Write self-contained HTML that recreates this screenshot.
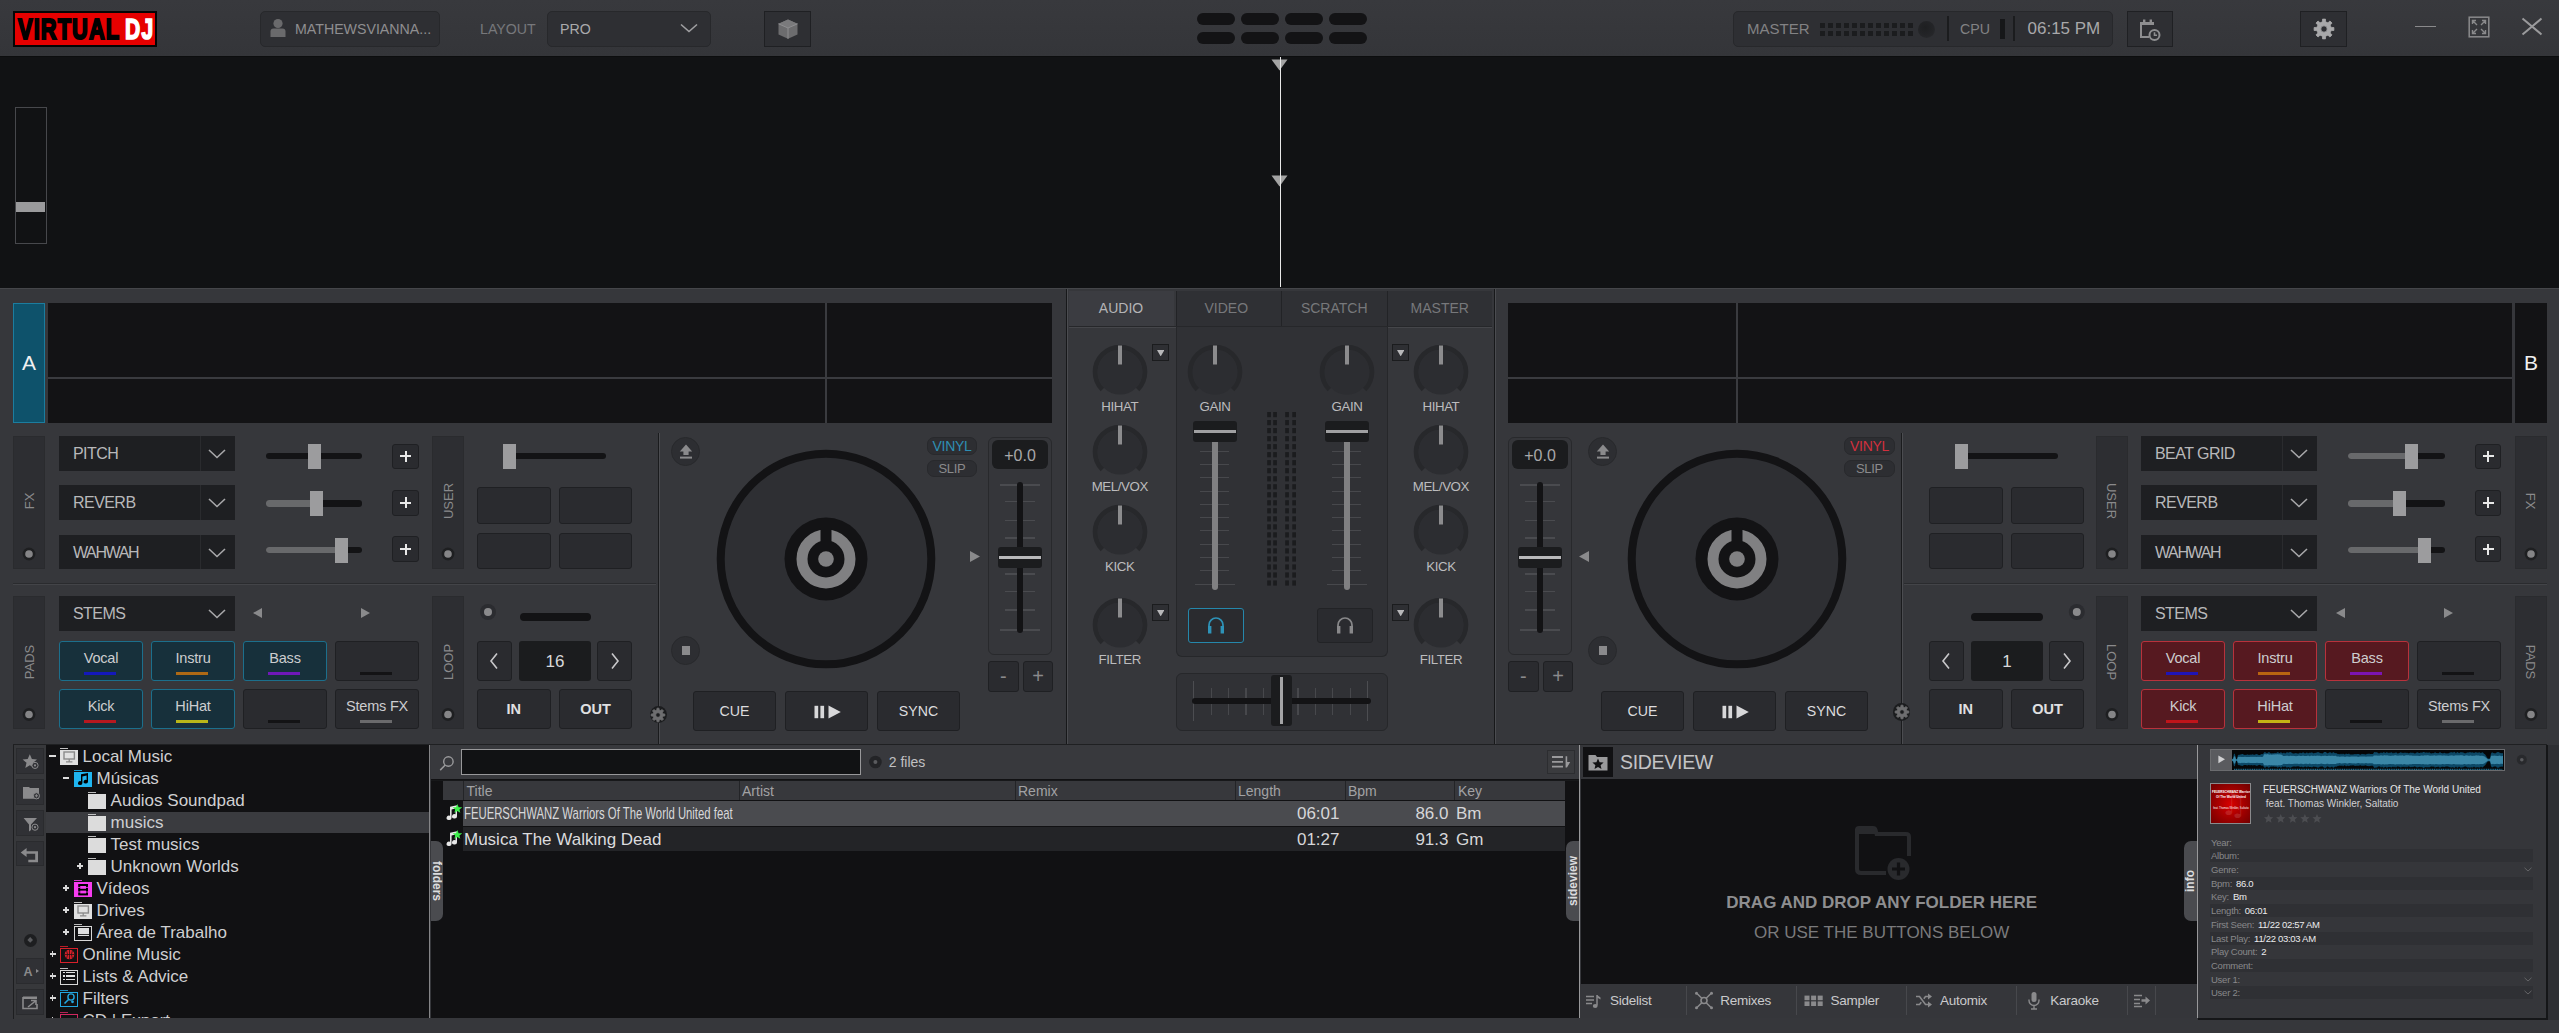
<!DOCTYPE html>
<html lang="en"><head><meta charset="utf-8"><title>VirtualDJ</title>
<style>
html,body{margin:0;padding:0;}
body{width:2559px;height:1033px;overflow:hidden;position:relative;background:#36373b;
 font-family:"Liberation Sans",sans-serif;color:#bbb;}
body div, body svg{position:absolute;box-sizing:border-box;}
.t{white-space:nowrap;}
.btn{background:#2a2b2f;border:1px solid #1f2023;border-radius:3px;}
.dd{background:#1e1f22;}
.strip{background:#2d2e32;border:1px solid #2a2b2e;}
.c{display:flex;align-items:center;justify-content:center;white-space:nowrap;}
.rot{white-space:nowrap;transform-origin:center center;}

</style></head>
<body>
<div style="left:0px;top:0px;width:2559px;height:56px;background:linear-gradient(#38393d,#343539);"></div>
<div style="left:13px;top:11px;width:144px;height:36px;background:#e60000;border:2px solid #050505;overflow:hidden;"><div class="t" style="left:2.6px;top:-6.3px;font-size:30px;line-height:44px;font-weight:bold;color:#000;transform:scaleX(0.728);transform-origin:left center;-webkit-text-stroke:2.1px #000;letter-spacing:1.5px;">VIRTUAL</div><div class="t" style="left:109.8px;top:-6.3px;font-size:30px;line-height:44px;font-weight:bold;color:#fff;transform:scaleX(0.70);transform-origin:left center;-webkit-text-stroke:1.7px #fff;letter-spacing:1.8px;">DJ</div></div>
<div style="left:260px;top:11px;width:180px;height:36px;background:#2e2f33;border:1px solid #27282b;border-radius:5px;"></div>
<svg style="left:269px;top:18px;" width="18" height="20" viewBox="0 0 18 20"><circle cx="9" cy="5.5" r="4.6" fill="#6a6a6c"/><path d="M1.5 19V13.5Q1.5 10.5 4.5 10.5H13.5Q16.5 10.5 16.5 13.5V19Z" fill="#6a6a6c"/></svg>
<div class="t" style="left:295px;top:19.6px;font-size:14.2px;line-height:18px;color:#8e8e90;">MATHEWSVIANNA...</div>
<div class="t" style="left:480px;top:19.8px;font-size:14.2px;line-height:18px;color:#77787b;">LAYOUT</div>
<div style="left:547px;top:11px;width:164px;height:36px;background:#2e2f33;border:1px solid #27282b;border-radius:5px;"></div>
<div class="t" style="left:560px;top:19.8px;font-size:14.2px;line-height:18px;color:#aaaaac;">PRO</div>
<svg style="left:679px;top:22px;" width="20" height="12" viewBox="0 0 20 12"><path d="M2 2.5L10 9.5L18 2.5" fill="none" stroke="#a0a0a2" stroke-width="1.6"/></svg>
<div style="left:764px;top:11px;width:47px;height:36px;background:#2e2f33;border:1px solid #1f2023;"></div>
<svg style="left:776px;top:17px;" width="24" height="24" viewBox="0 0 24 24"><path d="M12 2.5L21.5 6.8V17.4L12 21.8L2.5 17.4V6.8Z" fill="#6c6c6e"/><path d="M12 2.5L21.5 6.8L12 11L2.5 6.8Z" fill="#7a7a7c"/><path d="M2.5 6.8L12 11L21.5 6.8M12 11V21.8" stroke="#8e8e90" stroke-width="1" fill="none"/></svg>
<div style="left:1197px;top:13px;width:38px;height:12px;background:#131315;border-radius:6px;"></div>
<div style="left:1241px;top:13px;width:38px;height:12px;background:#131315;border-radius:6px;"></div>
<div style="left:1285px;top:13px;width:38px;height:12px;background:#131315;border-radius:6px;"></div>
<div style="left:1329px;top:13px;width:38px;height:12px;background:#131315;border-radius:6px;"></div>
<div style="left:1197px;top:32px;width:38px;height:12px;background:#131315;border-radius:6px;"></div>
<div style="left:1241px;top:32px;width:38px;height:12px;background:#131315;border-radius:6px;"></div>
<div style="left:1285px;top:32px;width:38px;height:12px;background:#131315;border-radius:6px;"></div>
<div style="left:1329px;top:32px;width:38px;height:12px;background:#131315;border-radius:6px;"></div>
<div style="left:1733px;top:11px;width:380px;height:36px;background:#2e2f33;border:1px solid #27282b;border-radius:5px;"></div>
<div class="t" style="left:1747px;top:19.2px;font-size:15px;line-height:20px;color:#828284;">MASTER</div>
<div style="left:1820px;top:23px;width:5.4px;height:5px;background:#1b1c1e;"></div>
<div style="left:1828px;top:23px;width:5.4px;height:5px;background:#1b1c1e;"></div>
<div style="left:1836px;top:23px;width:5.4px;height:5px;background:#1b1c1e;"></div>
<div style="left:1844px;top:23px;width:5.4px;height:5px;background:#1b1c1e;"></div>
<div style="left:1852px;top:23px;width:5.4px;height:5px;background:#1b1c1e;"></div>
<div style="left:1860px;top:23px;width:5.4px;height:5px;background:#1b1c1e;"></div>
<div style="left:1868px;top:23px;width:5.4px;height:5px;background:#1b1c1e;"></div>
<div style="left:1876px;top:23px;width:5.4px;height:5px;background:#1b1c1e;"></div>
<div style="left:1884px;top:23px;width:5.4px;height:5px;background:#1b1c1e;"></div>
<div style="left:1892px;top:23px;width:5.4px;height:5px;background:#1b1c1e;"></div>
<div style="left:1900px;top:23px;width:5.4px;height:5px;background:#1b1c1e;"></div>
<div style="left:1908px;top:23px;width:5.4px;height:5px;background:#1b1c1e;"></div>
<div style="left:1820px;top:30.5px;width:5.4px;height:5px;background:#1b1c1e;"></div>
<div style="left:1828px;top:30.5px;width:5.4px;height:5px;background:#1b1c1e;"></div>
<div style="left:1836px;top:30.5px;width:5.4px;height:5px;background:#1b1c1e;"></div>
<div style="left:1844px;top:30.5px;width:5.4px;height:5px;background:#1b1c1e;"></div>
<div style="left:1852px;top:30.5px;width:5.4px;height:5px;background:#1b1c1e;"></div>
<div style="left:1860px;top:30.5px;width:5.4px;height:5px;background:#1b1c1e;"></div>
<div style="left:1868px;top:30.5px;width:5.4px;height:5px;background:#1b1c1e;"></div>
<div style="left:1876px;top:30.5px;width:5.4px;height:5px;background:#1b1c1e;"></div>
<div style="left:1884px;top:30.5px;width:5.4px;height:5px;background:#1b1c1e;"></div>
<div style="left:1892px;top:30.5px;width:5.4px;height:5px;background:#1b1c1e;"></div>
<div style="left:1900px;top:30.5px;width:5.4px;height:5px;background:#1b1c1e;"></div>
<div style="left:1908px;top:30.5px;width:5.4px;height:5px;background:#1b1c1e;"></div>
<div style="left:1918px;top:20.5px;width:17px;height:17px;border-radius:50%;background:radial-gradient(circle at 42% 38%,#1e1f21 0%,#242528 60%,#2b2c2f 100%);"></div>
<div style="left:1947px;top:16px;width:1.5px;height:25px;background:#1b1c1e;"></div>
<div class="t" style="left:1960px;top:20px;font-size:14.2px;line-height:18px;color:#828284;">CPU</div>
<div style="left:1999.5px;top:19px;width:5.5px;height:20px;background:#161719;"></div>
<div style="left:2013px;top:16px;width:1.5px;height:25px;background:#1b1c1e;"></div>
<div class="t" style="left:2027.5px;top:18px;font-size:17px;line-height:22px;color:#a8a8aa;">06:15 PM</div>
<div style="left:2127px;top:11px;width:46px;height:36px;background:#2e2f33;border:1px solid #1f2023;"></div>
<svg style="left:2138px;top:18px;" width="26" height="26" viewBox="0 0 26 26"><path d="M3 4H16V7H3Z" fill="#8e8e90"/><path d="M3 4V19H11" fill="none" stroke="#8e8e90" stroke-width="2"/><rect x="5" y="1.5" width="2.4" height="4" fill="#8e8e90"/><rect x="11.6" y="1.5" width="2.4" height="4" fill="#8e8e90"/><circle cx="16.5" cy="17" r="5" fill="none" stroke="#8e8e90" stroke-width="2"/><path d="M16.5 14.2V17.3H19" fill="none" stroke="#8e8e90" stroke-width="1.6"/></svg>
<div style="left:2300px;top:11px;width:47px;height:36px;background:#2e2f33;border:1px solid #1f2023;"></div>
<svg style="left:2311.5px;top:17px;" width="24" height="24" viewBox="0 0 24 24"><path d="M19.13 10.44L21.89 10.51L21.89 13.49L19.13 13.56L18.15 15.94L20.04 17.94L17.94 20.04L15.94 18.15L13.56 19.13L13.49 21.89L10.51 21.89L10.44 19.13L8.06 18.15L6.06 20.04L3.96 17.94L5.85 15.94L4.87 13.56L2.11 13.49L2.11 10.51L4.87 10.44L5.85 8.06L3.96 6.06L6.06 3.96L8.06 5.85L10.44 4.87L10.51 2.11L13.49 2.11L13.56 4.87L15.94 5.85L17.94 3.96L20.04 6.06L18.15 8.06ZM15.20 12.00A3.2 3.2 0 1 0 8.80 12.00A3.2 3.2 0 1 0 15.20 12.00Z" fill="#a8a8aa" fill-rule="evenodd" stroke="#a8a8aa" stroke-width="0.8" stroke-linejoin="round"/></svg>
<div style="left:2415px;top:25.5px;width:21px;height:1.5px;background:#8a8a8c;"></div>
<svg style="left:2467.5px;top:15.5px;" width="23" height="23" viewBox="0 0 23 23"><rect x="1.2" y="1.2" width="19.6" height="19.6" fill="none" stroke="#8a8a8c" stroke-width="1.5"/><path d="M4.5 8V4.5H8M4.5 4.5L9 9M14 4.5H17.5V8M17.5 4.5L13 9M4.5 14V17.5H8M4.5 17.5L9 13M17.5 14V17.5H14M17.5 17.5L13 13" fill="none" stroke="#8a8a8c" stroke-width="1.4"/></svg>
<svg style="left:2521px;top:17px;" width="22" height="19" viewBox="0 0 22 19"><path d="M1.5 1.5L20.5 17.5M20.5 1.5L1.5 17.5" stroke="#9a9a9c" stroke-width="2" fill="none"/></svg>
<div style="left:0px;top:56px;width:2559px;height:232px;background:#111214;border-top:1px solid #0c0d0e;"></div>
<div style="left:15px;top:107px;width:32px;height:136.5px;background:#111214;border:1px solid #47484c;"></div>
<div style="left:16px;top:202px;width:29px;height:10px;background:#9a9a9c;"></div>
<div style="left:1279.7px;top:57px;width:1.5px;height:230px;background:#e8e8e8;"></div>
<svg style="left:1270px;top:58px;" width="19" height="14" viewBox="0 0 19 14"><path d="M1.5 1.5H17.5L9.5 12.5Z" fill="#a4a4a4"/></svg>
<svg style="left:1270px;top:173.5px;" width="19" height="14" viewBox="0 0 19 14"><path d="M1.5 1.5H17.5L9.5 12.5Z" fill="#a4a4a4"/></svg>
<div style="left:1279.7px;top:57px;width:1.5px;height:230px;background:#e8e8e8;"></div>
<div style="left:0px;top:288px;width:2559px;height:456px;background:#36373b;border-top:1px solid #45464a;"></div>
<div class="c" style="left:13px;top:303px;width:32px;height:120px;background:#0e526b;border:1px solid #1b7d9f;font-size:21px;color:#f0f0f0;">A</div>
<div style="left:48px;top:303px;width:1004px;height:120px;background:#131315;"></div>
<div style="left:825px;top:303px;width:2px;height:120px;background:#3a3b3f;"></div>
<div style="left:48px;top:377px;width:1004px;height:2px;background:#3a3b3f;"></div>
<div class="strip" style="left:13px;top:436px;width:32px;height:133px;"></div>
<div class="rot c" style="left:-11px;top:491px;width:80px;height:20px;font-size:13px;color:#8a8a8c;transform:rotate(-90deg);">FX</div>
<svg style="left:21px;top:546px;" width="16" height="16" viewBox="0 0 16 16"><circle cx="8" cy="8" r="6.4" fill="#1e1f21"/><circle cx="8" cy="8" r="3.8" fill="#858587"/></svg>
<div class="dd" style="left:59px;top:436px;width:176px;height:35px;"></div>
<div class="t" style="left:73px;top:443.4px;font-size:16px;line-height:21px;color:#b8b8ba;letter-spacing:-0.55px;">PITCH</div>
<div style="left:200px;top:436px;width:1px;height:35px;background:#2a2b2e;"></div>
<svg style="left:208px;top:449.3px;" width="18" height="10" viewBox="0 0 18 10"><path d="M1 1L9 8.5L17 1" fill="none" stroke="#a8a8aa" stroke-width="1.6"/></svg>
<div style="left:266px;top:453.3px;width:96px;height:6.2px;background:#131315;border-radius:3px;"></div>
<div style="left:308px;top:443.8px;width:13px;height:25px;background:#9c9c9e;"></div>
<div class="btn" style="left:392px;top:443.5px;width:27px;height:25.5px;"></div>
<div style="left:400px;top:455.25px;width:11px;height:2px;background:#e8e8e8;"></div>
<div style="left:404.5px;top:450.75px;width:2px;height:11px;background:#e8e8e8;"></div>
<div class="dd" style="left:59px;top:485px;width:176px;height:35px;"></div>
<div class="t" style="left:73px;top:492.4px;font-size:16px;line-height:21px;color:#b8b8ba;letter-spacing:-0.55px;">REVERB</div>
<div style="left:200px;top:485px;width:1px;height:35px;background:#2a2b2e;"></div>
<svg style="left:208px;top:498.3px;" width="18" height="10" viewBox="0 0 18 10"><path d="M1 1L9 8.5L17 1" fill="none" stroke="#a8a8aa" stroke-width="1.6"/></svg>
<div style="left:266px;top:500.4px;width:96px;height:6.2px;background:#131315;border-radius:3px;"></div>
<div style="left:266px;top:500.4px;width:48px;height:6.2px;background:#68696b;border-radius:3px;"></div>
<div style="left:310px;top:490.9px;width:13px;height:25px;background:#9c9c9e;"></div>
<div class="btn" style="left:392px;top:489.5px;width:27px;height:26px;"></div>
<div style="left:400px;top:501.5px;width:11px;height:2px;background:#e8e8e8;"></div>
<div style="left:404.5px;top:497px;width:2px;height:11px;background:#e8e8e8;"></div>
<div class="dd" style="left:59px;top:535px;width:176px;height:34px;"></div>
<div class="t" style="left:73px;top:541.9px;font-size:16px;line-height:21px;color:#b8b8ba;letter-spacing:-1.4px;">WAHWAH</div>
<div style="left:200px;top:535px;width:1px;height:34px;background:#2a2b2e;"></div>
<svg style="left:208px;top:547.8px;" width="18" height="10" viewBox="0 0 18 10"><path d="M1 1L9 8.5L17 1" fill="none" stroke="#a8a8aa" stroke-width="1.6"/></svg>
<div style="left:266px;top:547px;width:96px;height:6.2px;background:#131315;border-radius:3px;"></div>
<div style="left:266px;top:547px;width:73px;height:6.2px;background:#68696b;border-radius:3px;"></div>
<div style="left:335px;top:537.5px;width:13px;height:25px;background:#9c9c9e;"></div>
<div class="btn" style="left:392px;top:536px;width:27px;height:26px;"></div>
<div style="left:400px;top:548px;width:11px;height:2px;background:#e8e8e8;"></div>
<div style="left:404.5px;top:543.5px;width:2px;height:11px;background:#e8e8e8;"></div>
<div class="strip" style="left:432px;top:436px;width:32px;height:133px;"></div>
<div class="rot c" style="left:408px;top:491px;width:80px;height:20px;font-size:13px;color:#8a8a8c;transform:rotate(-90deg);">USER</div>
<svg style="left:440px;top:546px;" width="16" height="16" viewBox="0 0 16 16"><circle cx="8" cy="8" r="6.4" fill="#1e1f21"/><circle cx="8" cy="8" r="3.8" fill="#858587"/></svg>
<div style="left:503px;top:453.3px;width:103px;height:6.2px;background:#131315;border-radius:3px;"></div>
<div style="left:503px;top:443.8px;width:13px;height:25px;background:#9c9c9e;"></div>
<div class="btn" style="left:477px;top:487px;width:73.5px;height:36.5px;"></div>
<div class="btn" style="left:477px;top:532.5px;width:73.5px;height:36px;"></div>
<div class="btn" style="left:559px;top:487px;width:73px;height:36.5px;"></div>
<div class="btn" style="left:559px;top:532.5px;width:73px;height:36px;"></div>
<div style="left:13px;top:583px;width:643px;height:1px;background:#2a2b2e;"></div>
<div style="left:13px;top:584px;width:643px;height:1px;background:#434448;"></div>
<div style="left:658px;top:433px;width:1px;height:311px;background:#1a1b1d;"></div>
<div style="left:659px;top:433px;width:1px;height:311px;background:#4b4c50;"></div>
<div class="strip" style="left:13px;top:596px;width:32px;height:133px;"></div>
<div class="rot c" style="left:-11px;top:652px;width:80px;height:20px;font-size:13px;color:#8a8a8c;transform:rotate(-90deg);">PADS</div>
<svg style="left:21px;top:706px;" width="16" height="16" viewBox="0 0 16 16"><circle cx="8" cy="8.5" r="6.4" fill="#1e1f21"/><circle cx="8" cy="8.5" r="3.8" fill="#858587"/></svg>
<div class="dd" style="left:59px;top:596px;width:176px;height:35px;"></div>
<div class="t" style="left:73px;top:603.4px;font-size:16px;line-height:21px;color:#b8b8ba;letter-spacing:-0.55px;">STEMS</div>
<svg style="left:208px;top:609.3px;" width="18" height="10" viewBox="0 0 18 10"><path d="M1 1L9 8.5L17 1" fill="none" stroke="#a8a8aa" stroke-width="1.6"/></svg>
<svg style="left:252.5px;top:608px;" width="9" height="10" viewBox="0 0 9 10"><path d="M9 0L0 5.0L9 10Z" fill="#8a8a8c"/></svg>
<svg style="left:361px;top:608px;" width="9" height="10" viewBox="0 0 9 10"><path d="M0 0L9 5.0L0 10Z" fill="#8a8a8c"/></svg>
<div style="left:59px;top:641px;width:84px;height:39.5px;background:#17303b;border:1px solid #1c6f8c;border-radius:3px;"></div>
<div class="t" style="left:59px;width:84px;text-align:center;top:648.7px;font-size:14.5px;line-height:19px;color:#cdcdcf;letter-spacing:-0.2px;">Vocal</div>
<div style="left:83.5px;top:671.5px;width:32.1px;height:3px;background:#1414d8;opacity:0.82;"></div>
<div style="left:151px;top:641px;width:84px;height:39.5px;background:#17303b;border:1px solid #1c6f8c;border-radius:3px;"></div>
<div class="t" style="left:151px;width:84px;text-align:center;top:648.7px;font-size:14.5px;line-height:19px;color:#cdcdcf;letter-spacing:-0.2px;">Instru</div>
<div style="left:175.5px;top:671.5px;width:32.1px;height:3px;background:#d0760e;opacity:0.82;"></div>
<div style="left:243px;top:641px;width:84px;height:39.5px;background:#17303b;border:1px solid #1c6f8c;border-radius:3px;"></div>
<div class="t" style="left:243px;width:84px;text-align:center;top:648.7px;font-size:14.5px;line-height:19px;color:#cdcdcf;letter-spacing:-0.2px;">Bass</div>
<div style="left:267.5px;top:671.5px;width:32.1px;height:3px;background:#8414d4;opacity:0.82;"></div>
<div style="left:335px;top:641px;width:84px;height:39.5px;background:#2a2b2f;border:1px solid #1f2023;border-radius:3px;"></div>
<div style="left:359.5px;top:671.5px;width:32.1px;height:3px;background:#131315;"></div>
<div style="left:59px;top:689px;width:84px;height:39.5px;background:#17303b;border:1px solid #1c6f8c;border-radius:3px;"></div>
<div class="t" style="left:59px;width:84px;text-align:center;top:696.7px;font-size:14.5px;line-height:19px;color:#cdcdcf;letter-spacing:-0.2px;">Kick</div>
<div style="left:83.5px;top:719.5px;width:32.1px;height:3px;background:#d8141a;opacity:0.82;"></div>
<div style="left:151px;top:689px;width:84px;height:39.5px;background:#17303b;border:1px solid #1c6f8c;border-radius:3px;"></div>
<div class="t" style="left:151px;width:84px;text-align:center;top:696.7px;font-size:14.5px;line-height:19px;color:#cdcdcf;letter-spacing:-0.2px;">HiHat</div>
<div style="left:175.5px;top:719.5px;width:32.1px;height:3px;background:#dcd412;opacity:0.82;"></div>
<div style="left:243px;top:689px;width:84px;height:39.5px;background:#2a2b2f;border:1px solid #1f2023;border-radius:3px;"></div>
<div style="left:267.5px;top:719.5px;width:32.1px;height:3px;background:#131315;"></div>
<div style="left:335px;top:689px;width:84px;height:39.5px;background:#2a2b2f;border:1px solid #1f2023;border-radius:3px;"></div>
<div class="t" style="left:335px;width:84px;text-align:center;top:696.7px;font-size:14.5px;line-height:19px;color:#cdcdcf;letter-spacing:-0.2px;">Stems FX</div>
<div style="left:359.5px;top:719.5px;width:32.1px;height:3px;background:#6a6a6c;"></div>
<div class="strip" style="left:432px;top:596px;width:32px;height:133px;"></div>
<div class="rot c" style="left:408px;top:652px;width:80px;height:20px;font-size:13px;color:#8a8a8c;transform:rotate(-90deg);">LOOP</div>
<svg style="left:440px;top:706px;" width="16" height="16" viewBox="0 0 16 16"><circle cx="8" cy="8.5" r="6.4" fill="#1e1f21"/><circle cx="8" cy="8.5" r="3.8" fill="#858587"/></svg>
<svg style="left:479px;top:603px;" width="18" height="18" viewBox="0 0 18 18"><circle cx="9" cy="9" r="8" fill="#2b2c30"/><circle cx="9" cy="9" r="4" fill="#8a8a8c"/></svg>
<div style="left:519.5px;top:613px;width:71.5px;height:8px;background:#131315;border-radius:4px;"></div>
<div class="btn" style="left:477px;top:641px;width:35px;height:40px;"></div>
<svg style="left:488px;top:650px;" width="12" height="22" viewBox="0 0 12 22"><path d="M9 3.5L3 11L9 18.5" fill="none" stroke="#c8c8ca" stroke-width="1.6"/></svg>
<div class="c" style="left:519px;top:641px;width:72px;height:40px;background:#1b1c1e;border-radius:3px;font-size:17px;color:#d8d8da;padding-top:2px;">16</div>
<div class="btn" style="left:597px;top:641px;width:35px;height:40px;"></div>
<svg style="left:608.5px;top:650px;" width="12" height="22" viewBox="0 0 12 22"><path d="M3 3.5L9 11L3 18.5" fill="none" stroke="#c8c8ca" stroke-width="1.6"/></svg>
<div class="btn c" style="left:477px;top:689px;width:73.5px;height:40px;font-size:14.5px;color:#e0e0e2;font-weight:bold;">IN</div>
<div class="btn c" style="left:559px;top:689px;width:73px;height:40px;font-size:14.5px;color:#e0e0e2;font-weight:bold;">OUT</div>
<div style="left:649.6px;top:705.8px;width:17.4px;height:17.4px;border-radius:50%;background:#1b1c1e;"></div>
<svg style="left:649.3px;top:705.5px;" width="18" height="18" viewBox="0 0 18 18"><path d="M14.08 7.89L15.82 7.97L15.82 10.03L14.08 10.11L13.38 11.80L14.55 13.10L13.10 14.55L11.80 13.38L10.11 14.08L10.03 15.82L7.97 15.82L7.89 14.08L6.20 13.38L4.90 14.55L3.45 13.10L4.62 11.80L3.92 10.11L2.18 10.03L2.18 7.97L3.92 7.89L4.62 6.20L3.45 4.90L4.90 3.45L6.20 4.62L7.89 3.92L7.97 2.18L10.03 2.18L10.11 3.92L11.80 4.62L13.10 3.45L14.55 4.90L13.38 6.20ZM11.30 9.00A2.3 2.3 0 1 0 6.70 9.00A2.3 2.3 0 1 0 11.30 9.00Z" fill="#6e6e70" fill-rule="evenodd" stroke="#6e6e70" stroke-width="0.8" stroke-linejoin="round"/></svg>
<div style="left:671.1px;top:437.1px;width:29px;height:29px;border-radius:50%;background:#2d2e32;border:1px solid #28292c;"></div>
<svg style="left:678.6px;top:443.6px;" width="14" height="16" viewBox="0 0 14 16"><path d="M7 0.5L13.2 7.5H9.6V11H4.4V7.5H0.8Z" fill="#8a8a8c"/><rect x="1" y="12.6" width="12" height="2" fill="#8a8a8c"/></svg>
<div style="left:671.1px;top:636px;width:29px;height:29px;border-radius:50%;background:#2d2e32;border:1px solid #28292c;"></div>
<div style="left:681.6px;top:645.9px;width:8px;height:9.2px;background:#8a8a8c;"></div>
<svg style="left:715.3px;top:447.5px;" width="222" height="222" viewBox="0 0 222 222"><circle cx="111" cy="111" r="105.3" fill="#2e2f33" stroke="#131315" stroke-width="8"/><circle cx="111" cy="111" r="41.5" fill="#131315"/><circle cx="111" cy="111" r="24" fill="none" stroke="#808082" stroke-width="11"/><rect x="105.5" y="80" width="11" height="14" fill="#131315"/><circle cx="111" cy="111" r="7.8" fill="#808082"/></svg>
<div style="left:988px;top:436.5px;width:64px;height:218px;border:1px solid #28292c;border-radius:6px;background:#35363a;"></div>
<div class="c" style="left:992px;top:440px;width:56px;height:29px;background:#1b1c1e;border-radius:6px;font-size:16px;color:#a8a8aa;padding-top:2px;">+0.0</div>
<div style="left:1000px;top:484.4px;width:40.3px;height:2px;background:#4a4b4f;"></div>
<div style="left:1004.8px;top:501.1px;width:30.2px;height:1.4px;background:#4a4b4f;"></div>
<div style="left:1004.8px;top:519.7px;width:30.2px;height:1.4px;background:#4a4b4f;"></div>
<div style="left:1004.8px;top:537.3px;width:30.2px;height:1.4px;background:#4a4b4f;"></div>
<div style="left:1004.8px;top:573.3px;width:30.2px;height:1.4px;background:#4a4b4f;"></div>
<div style="left:1004.8px;top:590.7px;width:30.2px;height:1.4px;background:#4a4b4f;"></div>
<div style="left:1004.8px;top:609.3px;width:30.2px;height:1.4px;background:#4a4b4f;"></div>
<div style="left:1000px;top:628.5px;width:40.3px;height:2px;background:#4a4b4f;"></div>
<div style="left:1017px;top:482px;width:6px;height:150.5px;background:#131315;border-radius:3px;"></div>
<div style="left:998px;top:547px;width:44px;height:21px;background:#1b1c1e;border-radius:3px;"></div>
<div style="left:999px;top:556.2px;width:42px;height:2.8px;background:#b8b8ba;"></div>
<svg style="left:969.5px;top:550.5px;" width="10" height="11" viewBox="0 0 10 11"><path d="M0 0L10 5.5L0 11Z" fill="#8a8a8c"/></svg>
<div class="c" style="left:927px;top:437px;width:50px;height:18px;background:#2d2e32;border:1px solid #28292c;border-radius:7px;font-size:14px;color:#2d8fb4;letter-spacing:-0.3px;">VINYL</div>
<div class="c" style="left:927px;top:460px;width:50px;height:17px;background:#2d2e32;border:1px solid #28292c;border-radius:7px;font-size:13px;color:#8a8a8c;letter-spacing:-0.3px;">SLIP</div>
<div class="btn c" style="left:988px;top:661px;width:30.5px;height:31px;font-size:20px;color:#8a8a8c;">-</div>
<div class="btn c" style="left:1023px;top:661px;width:30px;height:31px;font-size:20px;color:#8a8a8c;">+</div>
<div class="btn c" style="left:693px;top:691px;width:83px;height:40px;font-size:14.2px;color:#dcdcde;">CUE</div>
<div class="btn" style="left:785px;top:691px;width:83px;height:40px;"></div>
<svg style="left:814px;top:705px;" width="27" height="14" viewBox="0 0 27 14"><rect x="0.5" y="0.8" width="3.7" height="12.4" fill="#d8d8da"/><rect x="6.4" y="0.8" width="3.7" height="12.4" fill="#d8d8da"/><path d="M14.5 0.6L26.8 7L14.5 13.4Z" fill="#d8d8da"/></svg>
<div class="btn c" style="left:877px;top:691px;width:83px;height:40px;font-size:14.2px;color:#dcdcde;">SYNC</div>
<div class="c" style="left:2515px;top:303px;width:32px;height:120px;background:#131315;font-size:21px;color:#f0f0f0;">B</div>
<div style="left:1508px;top:303px;width:1004px;height:120px;background:#131315;"></div>
<div style="left:1735.5px;top:303px;width:2px;height:120px;background:#3a3b3f;"></div>
<div style="left:1508px;top:377px;width:1004px;height:2px;background:#3a3b3f;"></div>
<div style="left:1901px;top:433px;width:1px;height:311px;background:#1a1b1d;"></div>
<div style="left:1902px;top:433px;width:1px;height:311px;background:#4b4c50;"></div>
<div style="left:1904px;top:583px;width:643px;height:1px;background:#2a2b2e;"></div>
<div style="left:1904px;top:584px;width:643px;height:1px;background:#434448;"></div>
<div style="left:1508px;top:436.5px;width:64px;height:218px;border:1px solid #28292c;border-radius:6px;background:#35363a;"></div>
<div class="c" style="left:1512px;top:440px;width:56px;height:29px;background:#1b1c1e;border-radius:6px;font-size:16px;color:#a8a8aa;padding-top:2px;">+0.0</div>
<div style="left:1520px;top:484.4px;width:40.3px;height:2px;background:#4a4b4f;"></div>
<div style="left:1524.8px;top:501.1px;width:30.2px;height:1.4px;background:#4a4b4f;"></div>
<div style="left:1524.8px;top:519.7px;width:30.2px;height:1.4px;background:#4a4b4f;"></div>
<div style="left:1524.8px;top:537.3px;width:30.2px;height:1.4px;background:#4a4b4f;"></div>
<div style="left:1524.8px;top:573.3px;width:30.2px;height:1.4px;background:#4a4b4f;"></div>
<div style="left:1524.8px;top:590.7px;width:30.2px;height:1.4px;background:#4a4b4f;"></div>
<div style="left:1524.8px;top:609.3px;width:30.2px;height:1.4px;background:#4a4b4f;"></div>
<div style="left:1520px;top:628.5px;width:40.3px;height:2px;background:#4a4b4f;"></div>
<div style="left:1537px;top:482px;width:6px;height:150.5px;background:#131315;border-radius:3px;"></div>
<div style="left:1518px;top:547px;width:44px;height:21px;background:#1b1c1e;border-radius:3px;"></div>
<div style="left:1519px;top:556.2px;width:42px;height:2.8px;background:#b8b8ba;"></div>
<svg style="left:1578.5px;top:550.5px;" width="10" height="11" viewBox="0 0 10 11"><path d="M10 0L0 5.5L10 11Z" fill="#8a8a8c"/></svg>
<div class="c" style="left:1844px;top:437px;width:51px;height:18px;background:#2d2e32;border:1px solid #28292c;border-radius:7px;font-size:14px;color:#d2303e;letter-spacing:-0.3px;">VINYL</div>
<div class="c" style="left:1844px;top:460px;width:51px;height:17px;background:#2d2e32;border:1px solid #28292c;border-radius:7px;font-size:13px;color:#8a8a8c;letter-spacing:-0.3px;">SLIP</div>
<div class="btn c" style="left:1508px;top:661px;width:30.5px;height:31px;font-size:20px;color:#8a8a8c;">-</div>
<div class="btn c" style="left:1543px;top:661px;width:30px;height:31px;font-size:20px;color:#8a8a8c;">+</div>
<div style="left:1588px;top:437.1px;width:29px;height:29px;border-radius:50%;background:#2d2e32;border:1px solid #28292c;"></div>
<svg style="left:1595.5px;top:443.6px;" width="14" height="16" viewBox="0 0 14 16"><path d="M7 0.5L13.2 7.5H9.6V11H4.4V7.5H0.8Z" fill="#8a8a8c"/><rect x="1" y="12.6" width="12" height="2" fill="#8a8a8c"/></svg>
<div style="left:1588px;top:636px;width:29px;height:29px;border-radius:50%;background:#2d2e32;border:1px solid #28292c;"></div>
<div style="left:1598.5px;top:645.9px;width:8px;height:9.2px;background:#8a8a8c;"></div>
<svg style="left:1626.4px;top:447.5px;" width="222" height="222" viewBox="0 0 222 222"><circle cx="111" cy="111" r="105.3" fill="#2e2f33" stroke="#131315" stroke-width="8"/><circle cx="111" cy="111" r="41.5" fill="#131315"/><circle cx="111" cy="111" r="24" fill="none" stroke="#808082" stroke-width="11"/><rect x="105.5" y="80" width="11" height="14" fill="#131315"/><circle cx="111" cy="111" r="7.8" fill="#808082"/></svg>
<div class="btn c" style="left:1601px;top:691px;width:83px;height:40px;font-size:14.2px;color:#dcdcde;">CUE</div>
<div class="btn" style="left:1693px;top:691px;width:83px;height:40px;"></div>
<svg style="left:1722px;top:705px;" width="27" height="14" viewBox="0 0 27 14"><rect x="0.5" y="0.8" width="3.7" height="12.4" fill="#d8d8da"/><rect x="6.4" y="0.8" width="3.7" height="12.4" fill="#d8d8da"/><path d="M14.5 0.6L26.8 7L14.5 13.4Z" fill="#d8d8da"/></svg>
<div class="btn c" style="left:1785px;top:691px;width:83px;height:40px;font-size:14.2px;color:#dcdcde;">SYNC</div>
<div style="left:1892.9px;top:703.3px;width:17.4px;height:17.4px;border-radius:50%;background:#1b1c1e;"></div>
<svg style="left:1892.6px;top:703px;" width="18" height="18" viewBox="0 0 18 18"><path d="M14.08 7.89L15.82 7.97L15.82 10.03L14.08 10.11L13.38 11.80L14.55 13.10L13.10 14.55L11.80 13.38L10.11 14.08L10.03 15.82L7.97 15.82L7.89 14.08L6.20 13.38L4.90 14.55L3.45 13.10L4.62 11.80L3.92 10.11L2.18 10.03L2.18 7.97L3.92 7.89L4.62 6.20L3.45 4.90L4.90 3.45L6.20 4.62L7.89 3.92L7.97 2.18L10.03 2.18L10.11 3.92L11.80 4.62L13.10 3.45L14.55 4.90L13.38 6.20ZM11.30 9.00A2.3 2.3 0 1 0 6.70 9.00A2.3 2.3 0 1 0 11.30 9.00Z" fill="#6e6e70" fill-rule="evenodd" stroke="#6e6e70" stroke-width="0.8" stroke-linejoin="round"/></svg>
<div style="left:1955px;top:453.3px;width:103px;height:6.2px;background:#131315;border-radius:3px;"></div>
<div style="left:1955px;top:443.8px;width:13px;height:25px;background:#9c9c9e;"></div>
<div class="btn" style="left:1929px;top:487px;width:73.7px;height:36.5px;"></div>
<div class="btn" style="left:1929px;top:532.5px;width:73.7px;height:36px;"></div>
<div class="btn" style="left:2011px;top:487px;width:73px;height:36.5px;"></div>
<div class="btn" style="left:2011px;top:532.5px;width:73px;height:36px;"></div>
<div class="strip" style="left:2096px;top:436px;width:32px;height:133px;"></div>
<div class="rot c" style="left:2072px;top:491px;width:80px;height:20px;font-size:13px;color:#8a8a8c;transform:rotate(90deg);">USER</div>
<svg style="left:2104px;top:546px;" width="16" height="16" viewBox="0 0 16 16"><circle cx="8" cy="8" r="6.4" fill="#1e1f21"/><circle cx="8" cy="8" r="3.8" fill="#858587"/></svg>
<div class="dd" style="left:2141px;top:436px;width:176px;height:35px;"></div>
<div class="t" style="left:2155px;top:443.4px;font-size:16px;line-height:21px;color:#b8b8ba;letter-spacing:-0.55px;">BEAT GRID</div>
<div style="left:2282px;top:436px;width:1px;height:35px;background:#2a2b2e;"></div>
<svg style="left:2290px;top:449.3px;" width="18" height="10" viewBox="0 0 18 10"><path d="M1 1L9 8.5L17 1" fill="none" stroke="#a8a8aa" stroke-width="1.6"/></svg>
<div style="left:2348px;top:453.3px;width:97px;height:6.2px;background:#131315;border-radius:3px;"></div>
<div style="left:2348px;top:453.3px;width:61px;height:6.2px;background:#68696b;border-radius:3px;"></div>
<div style="left:2405px;top:443.8px;width:13px;height:25px;background:#9c9c9e;"></div>
<div class="btn" style="left:2475px;top:443.5px;width:26px;height:25.5px;"></div>
<div style="left:2482.5px;top:455.25px;width:11px;height:2px;background:#e8e8e8;"></div>
<div style="left:2487px;top:450.75px;width:2px;height:11px;background:#e8e8e8;"></div>
<div class="dd" style="left:2141px;top:485px;width:176px;height:35px;"></div>
<div class="t" style="left:2155px;top:492.4px;font-size:16px;line-height:21px;color:#b8b8ba;letter-spacing:-0.55px;">REVERB</div>
<div style="left:2282px;top:485px;width:1px;height:35px;background:#2a2b2e;"></div>
<svg style="left:2290px;top:498.3px;" width="18" height="10" viewBox="0 0 18 10"><path d="M1 1L9 8.5L17 1" fill="none" stroke="#a8a8aa" stroke-width="1.6"/></svg>
<div style="left:2348px;top:500.4px;width:97px;height:6.2px;background:#131315;border-radius:3px;"></div>
<div style="left:2348px;top:500.4px;width:49px;height:6.2px;background:#68696b;border-radius:3px;"></div>
<div style="left:2393px;top:490.9px;width:13px;height:25px;background:#9c9c9e;"></div>
<div class="btn" style="left:2475px;top:489.5px;width:26px;height:26px;"></div>
<div style="left:2482.5px;top:501.5px;width:11px;height:2px;background:#e8e8e8;"></div>
<div style="left:2487px;top:497px;width:2px;height:11px;background:#e8e8e8;"></div>
<div class="dd" style="left:2141px;top:535px;width:176px;height:34px;"></div>
<div class="t" style="left:2155px;top:541.9px;font-size:16px;line-height:21px;color:#b8b8ba;letter-spacing:-1.4px;">WAHWAH</div>
<div style="left:2282px;top:535px;width:1px;height:34px;background:#2a2b2e;"></div>
<svg style="left:2290px;top:547.8px;" width="18" height="10" viewBox="0 0 18 10"><path d="M1 1L9 8.5L17 1" fill="none" stroke="#a8a8aa" stroke-width="1.6"/></svg>
<div style="left:2348px;top:547px;width:97px;height:6.2px;background:#131315;border-radius:3px;"></div>
<div style="left:2348px;top:547px;width:74px;height:6.2px;background:#68696b;border-radius:3px;"></div>
<div style="left:2418px;top:537.5px;width:13px;height:25px;background:#9c9c9e;"></div>
<div class="btn" style="left:2475px;top:536px;width:26px;height:26px;"></div>
<div style="left:2482.5px;top:548px;width:11px;height:2px;background:#e8e8e8;"></div>
<div style="left:2487px;top:543.5px;width:2px;height:11px;background:#e8e8e8;"></div>
<div class="strip" style="left:2515px;top:436px;width:32px;height:133px;"></div>
<div class="rot c" style="left:2491px;top:491px;width:80px;height:20px;font-size:13px;color:#8a8a8c;transform:rotate(90deg);">FX</div>
<svg style="left:2523px;top:546px;" width="16" height="16" viewBox="0 0 16 16"><circle cx="8" cy="8" r="6.4" fill="#1e1f21"/><circle cx="8" cy="8" r="3.8" fill="#858587"/></svg>
<div style="left:1971px;top:613px;width:71.7px;height:8px;background:#131315;border-radius:4px;"></div>
<svg style="left:2068px;top:603px;" width="18" height="18" viewBox="0 0 18 18"><circle cx="8.8" cy="9" r="8" fill="#2b2c30"/><circle cx="8.8" cy="9" r="4" fill="#8a8a8c"/></svg>
<div class="btn" style="left:1929px;top:641px;width:35px;height:40px;"></div>
<svg style="left:1940px;top:650px;" width="12" height="22" viewBox="0 0 12 22"><path d="M9 3.5L3 11L9 18.5" fill="none" stroke="#c8c8ca" stroke-width="1.6"/></svg>
<div class="c" style="left:1971px;top:641px;width:72px;height:40px;background:#1b1c1e;border-radius:3px;font-size:17px;color:#d8d8da;padding-top:2px;">1</div>
<div class="btn" style="left:2049px;top:641px;width:35px;height:40px;"></div>
<svg style="left:2060.5px;top:650px;" width="12" height="22" viewBox="0 0 12 22"><path d="M3 3.5L9 11L3 18.5" fill="none" stroke="#c8c8ca" stroke-width="1.6"/></svg>
<div class="btn c" style="left:1929px;top:689px;width:73.7px;height:40px;font-size:14.5px;color:#e0e0e2;font-weight:bold;">IN</div>
<div class="btn c" style="left:2011px;top:689px;width:73px;height:40px;font-size:14.5px;color:#e0e0e2;font-weight:bold;">OUT</div>
<div class="strip" style="left:2096px;top:596px;width:32px;height:133px;"></div>
<div class="rot c" style="left:2072px;top:652px;width:80px;height:20px;font-size:13px;color:#8a8a8c;transform:rotate(90deg);">LOOP</div>
<svg style="left:2104px;top:706px;" width="16" height="16" viewBox="0 0 16 16"><circle cx="8" cy="8.5" r="6.4" fill="#1e1f21"/><circle cx="8" cy="8.5" r="3.8" fill="#858587"/></svg>
<div class="dd" style="left:2141px;top:596px;width:176px;height:35px;"></div>
<div class="t" style="left:2155px;top:603.4px;font-size:16px;line-height:21px;color:#b8b8ba;letter-spacing:-0.55px;">STEMS</div>
<svg style="left:2290px;top:609.3px;" width="18" height="10" viewBox="0 0 18 10"><path d="M1 1L9 8.5L17 1" fill="none" stroke="#a8a8aa" stroke-width="1.6"/></svg>
<svg style="left:2335.5px;top:608px;" width="9" height="10" viewBox="0 0 9 10"><path d="M9 0L0 5.0L9 10Z" fill="#8a8a8c"/></svg>
<svg style="left:2443.9px;top:608px;" width="9" height="10" viewBox="0 0 9 10"><path d="M0 0L9 5.0L0 10Z" fill="#8a8a8c"/></svg>
<div style="left:2141px;top:641px;width:84px;height:39.5px;background:#561920;border:1px solid #b8323c;border-radius:3px;"></div>
<div class="t" style="left:2141px;width:84px;text-align:center;top:648.7px;font-size:14.5px;line-height:19px;color:#cdcdcf;letter-spacing:-0.2px;">Vocal</div>
<div style="left:2165.5px;top:671.5px;width:32.1px;height:3px;background:#1414d8;opacity:0.82;"></div>
<div style="left:2233px;top:641px;width:84px;height:39.5px;background:#561920;border:1px solid #b8323c;border-radius:3px;"></div>
<div class="t" style="left:2233px;width:84px;text-align:center;top:648.7px;font-size:14.5px;line-height:19px;color:#cdcdcf;letter-spacing:-0.2px;">Instru</div>
<div style="left:2257.5px;top:671.5px;width:32.1px;height:3px;background:#d0760e;opacity:0.82;"></div>
<div style="left:2325px;top:641px;width:84px;height:39.5px;background:#561920;border:1px solid #b8323c;border-radius:3px;"></div>
<div class="t" style="left:2325px;width:84px;text-align:center;top:648.7px;font-size:14.5px;line-height:19px;color:#cdcdcf;letter-spacing:-0.2px;">Bass</div>
<div style="left:2349.5px;top:671.5px;width:32.1px;height:3px;background:#8414d4;opacity:0.82;"></div>
<div style="left:2417px;top:641px;width:84px;height:39.5px;background:#2a2b2f;border:1px solid #1f2023;border-radius:3px;"></div>
<div style="left:2441.5px;top:671.5px;width:32.1px;height:3px;background:#131315;"></div>
<div style="left:2141px;top:689px;width:84px;height:39.5px;background:#561920;border:1px solid #b8323c;border-radius:3px;"></div>
<div class="t" style="left:2141px;width:84px;text-align:center;top:696.7px;font-size:14.5px;line-height:19px;color:#cdcdcf;letter-spacing:-0.2px;">Kick</div>
<div style="left:2165.5px;top:719.5px;width:32.1px;height:3px;background:#d8141a;opacity:0.82;"></div>
<div style="left:2233px;top:689px;width:84px;height:39.5px;background:#561920;border:1px solid #b8323c;border-radius:3px;"></div>
<div class="t" style="left:2233px;width:84px;text-align:center;top:696.7px;font-size:14.5px;line-height:19px;color:#cdcdcf;letter-spacing:-0.2px;">HiHat</div>
<div style="left:2257.5px;top:719.5px;width:32.1px;height:3px;background:#dcd412;opacity:0.82;"></div>
<div style="left:2325px;top:689px;width:84px;height:39.5px;background:#2a2b2f;border:1px solid #1f2023;border-radius:3px;"></div>
<div style="left:2349.5px;top:719.5px;width:32.1px;height:3px;background:#131315;"></div>
<div style="left:2417px;top:689px;width:84px;height:39.5px;background:#2a2b2f;border:1px solid #1f2023;border-radius:3px;"></div>
<div class="t" style="left:2417px;width:84px;text-align:center;top:696.7px;font-size:14.5px;line-height:19px;color:#cdcdcf;letter-spacing:-0.2px;">Stems FX</div>
<div style="left:2441.5px;top:719.5px;width:32.1px;height:3px;background:#6a6a6c;"></div>
<div class="strip" style="left:2515px;top:596px;width:32px;height:133px;"></div>
<div class="rot c" style="left:2491px;top:652px;width:80px;height:20px;font-size:13px;color:#8a8a8c;transform:rotate(90deg);">PADS</div>
<svg style="left:2523px;top:706px;" width="16" height="16" viewBox="0 0 16 16"><circle cx="8" cy="8.5" r="6.4" fill="#1e1f21"/><circle cx="8" cy="8.5" r="3.8" fill="#858587"/></svg>
<div style="left:1066px;top:289px;width:1px;height:455px;background:#17181a;"></div>
<div style="left:1067px;top:289px;width:1px;height:455px;background:#4b4c50;"></div>
<div style="left:1494px;top:289px;width:1px;height:455px;background:#17181a;"></div>
<div style="left:1495px;top:289px;width:1px;height:455px;background:#4b4c50;"></div>
<div class="c" style="left:1068.5px;top:290.5px;width:105px;height:35px;background:#3b3c41;font-size:14px;color:#b4b4b6;">AUDIO</div>
<div class="c" style="left:1176.5px;top:290.5px;width:104.5px;height:35px;background:#2f3034;font-size:14px;color:#77787b;padding-right:5px;">VIDEO</div>
<div class="c" style="left:1282px;top:290.5px;width:104.5px;height:35px;background:#2f3034;font-size:14px;color:#77787b;">SCRATCH</div>
<div class="c" style="left:1387.5px;top:290.5px;width:104.5px;height:35px;background:#2f3034;font-size:14px;color:#77787b;">MASTER</div>
<div style="left:1175.5px;top:290.5px;width:1.2px;height:35px;background:#222326;"></div>
<div style="left:1281px;top:290.5px;width:1.2px;height:35px;background:#222326;"></div>
<div style="left:1386.5px;top:290.5px;width:1.2px;height:35px;background:#222326;"></div>
<div style="left:1068.5px;top:325.5px;width:423.5px;height:1px;background:#26272a;"></div>
<div style="left:1068.5px;top:326.5px;width:423.5px;height:1px;background:#45464a;"></div>
<div style="left:1175.5px;top:327px;width:212.5px;height:329.5px;background:#303135;border:1px solid #26272a;border-top:none;border-radius:0 0 6px 6px;"></div>
<svg style="left:1089.8px;top:341.7px;" width="60" height="60" viewBox="0 0 60 60"><path d="M12.46 47.54A24.8 24.8 0 1 1 47.54 47.54" fill="none" stroke="#27282b" stroke-width="5"/><circle cx="30" cy="30" r="22.6" fill="#2c2d31"/><rect x="28" y="3.5" width="4" height="19" fill="#8c8c8e"/></svg>
<div class="t" style="left:1074.8px;width:90px;text-align:center;top:397.5px;font-size:13.3px;line-height:17px;color:#bcbcbe;letter-spacing:-0.4px;">HIHAT</div>
<svg style="left:1089.8px;top:421.8px;" width="60" height="60" viewBox="0 0 60 60"><path d="M12.46 47.54A24.8 24.8 0 1 1 47.54 47.54" fill="none" stroke="#27282b" stroke-width="5"/><circle cx="30" cy="30" r="22.6" fill="#2c2d31"/><rect x="28" y="3.5" width="4" height="19" fill="#8c8c8e"/></svg>
<div class="t" style="left:1074.8px;width:90px;text-align:center;top:477.9px;font-size:13.3px;line-height:17px;color:#bcbcbe;letter-spacing:-0.4px;">MEL/VOX</div>
<svg style="left:1089.8px;top:502px;" width="60" height="60" viewBox="0 0 60 60"><path d="M12.46 47.54A24.8 24.8 0 1 1 47.54 47.54" fill="none" stroke="#27282b" stroke-width="5"/><circle cx="30" cy="30" r="22.6" fill="#2c2d31"/><rect x="28" y="3.5" width="4" height="19" fill="#8c8c8e"/></svg>
<div class="t" style="left:1074.8px;width:90px;text-align:center;top:557.5px;font-size:13.3px;line-height:17px;color:#bcbcbe;letter-spacing:-0.4px;">KICK</div>
<svg style="left:1089.8px;top:595px;" width="60" height="60" viewBox="0 0 60 60"><path d="M12.46 47.54A24.8 24.8 0 1 1 47.54 47.54" fill="none" stroke="#27282b" stroke-width="5"/><circle cx="30" cy="30" r="22.6" fill="#2c2d31"/><rect x="28" y="3.5" width="4" height="19" fill="#8c8c8e"/></svg>
<div class="t" style="left:1074.8px;width:90px;text-align:center;top:651.2px;font-size:13.3px;line-height:17px;color:#bcbcbe;letter-spacing:-0.4px;">FILTER</div>
<svg style="left:1410.9px;top:341.7px;" width="60" height="60" viewBox="0 0 60 60"><path d="M12.46 47.54A24.8 24.8 0 1 1 47.54 47.54" fill="none" stroke="#27282b" stroke-width="5"/><circle cx="30" cy="30" r="22.6" fill="#2c2d31"/><rect x="28" y="3.5" width="4" height="19" fill="#8c8c8e"/></svg>
<div class="t" style="left:1395.9px;width:90px;text-align:center;top:397.5px;font-size:13.3px;line-height:17px;color:#bcbcbe;letter-spacing:-0.4px;">HIHAT</div>
<svg style="left:1410.9px;top:421.8px;" width="60" height="60" viewBox="0 0 60 60"><path d="M12.46 47.54A24.8 24.8 0 1 1 47.54 47.54" fill="none" stroke="#27282b" stroke-width="5"/><circle cx="30" cy="30" r="22.6" fill="#2c2d31"/><rect x="28" y="3.5" width="4" height="19" fill="#8c8c8e"/></svg>
<div class="t" style="left:1395.9px;width:90px;text-align:center;top:477.9px;font-size:13.3px;line-height:17px;color:#bcbcbe;letter-spacing:-0.4px;">MEL/VOX</div>
<svg style="left:1410.9px;top:502px;" width="60" height="60" viewBox="0 0 60 60"><path d="M12.46 47.54A24.8 24.8 0 1 1 47.54 47.54" fill="none" stroke="#27282b" stroke-width="5"/><circle cx="30" cy="30" r="22.6" fill="#2c2d31"/><rect x="28" y="3.5" width="4" height="19" fill="#8c8c8e"/></svg>
<div class="t" style="left:1395.9px;width:90px;text-align:center;top:557.5px;font-size:13.3px;line-height:17px;color:#bcbcbe;letter-spacing:-0.4px;">KICK</div>
<svg style="left:1410.9px;top:595px;" width="60" height="60" viewBox="0 0 60 60"><path d="M12.46 47.54A24.8 24.8 0 1 1 47.54 47.54" fill="none" stroke="#27282b" stroke-width="5"/><circle cx="30" cy="30" r="22.6" fill="#2c2d31"/><rect x="28" y="3.5" width="4" height="19" fill="#8c8c8e"/></svg>
<div class="t" style="left:1395.9px;width:90px;text-align:center;top:651.2px;font-size:13.3px;line-height:17px;color:#bcbcbe;letter-spacing:-0.4px;">FILTER</div>
<svg style="left:1185px;top:341.7px;" width="60" height="60" viewBox="0 0 60 60"><path d="M12.46 47.54A24.8 24.8 0 1 1 47.54 47.54" fill="none" stroke="#27282b" stroke-width="5"/><circle cx="30" cy="30" r="22.6" fill="#2c2d31"/><rect x="28" y="3.5" width="4" height="19" fill="#8c8c8e"/></svg>
<div class="t" style="left:1170px;width:90px;text-align:center;top:397.5px;font-size:13.3px;line-height:17px;color:#bcbcbe;letter-spacing:-0.4px;">GAIN</div>
<svg style="left:1317px;top:341.7px;" width="60" height="60" viewBox="0 0 60 60"><path d="M12.46 47.54A24.8 24.8 0 1 1 47.54 47.54" fill="none" stroke="#27282b" stroke-width="5"/><circle cx="30" cy="30" r="22.6" fill="#2c2d31"/><rect x="28" y="3.5" width="4" height="19" fill="#8c8c8e"/></svg>
<div class="t" style="left:1302px;width:90px;text-align:center;top:397.5px;font-size:13.3px;line-height:17px;color:#bcbcbe;letter-spacing:-0.4px;">GAIN</div>
<div style="left:1152px;top:344.2px;width:16.8px;height:16.6px;background:#2e2f33;border:1px solid #1b1c1e;"></div>
<svg style="left:1156.7px;top:349.8px;" width="7.4" height="6.4" viewBox="0 0 7.4 6.4"><path d="M0 0L7.4 0L3.7 6.4Z" fill="#b8b8ba"/></svg>
<div style="left:1152px;top:604.4px;width:16.8px;height:16.6px;background:#2e2f33;border:1px solid #1b1c1e;"></div>
<svg style="left:1156.7px;top:610px;" width="7.4" height="6.4" viewBox="0 0 7.4 6.4"><path d="M0 0L7.4 0L3.7 6.4Z" fill="#b8b8ba"/></svg>
<div style="left:1392px;top:344.2px;width:16.8px;height:16.6px;background:#2e2f33;border:1px solid #1b1c1e;"></div>
<svg style="left:1396.7px;top:349.8px;" width="7.4" height="6.4" viewBox="0 0 7.4 6.4"><path d="M0 0L7.4 0L3.7 6.4Z" fill="#b8b8ba"/></svg>
<div style="left:1392px;top:604.4px;width:16.8px;height:16.6px;background:#2e2f33;border:1px solid #1b1c1e;"></div>
<svg style="left:1396.7px;top:610px;" width="7.4" height="6.4" viewBox="0 0 7.4 6.4"><path d="M0 0L7.4 0L3.7 6.4Z" fill="#b8b8ba"/></svg>
<div style="left:1200px;top:450.8px;width:29px;height:1.2px;background:#47484c;"></div>
<div style="left:1200px;top:464.05px;width:29px;height:1.2px;background:#47484c;"></div>
<div style="left:1200px;top:477.3px;width:29px;height:1.2px;background:#47484c;"></div>
<div style="left:1200px;top:490.55px;width:29px;height:1.2px;background:#47484c;"></div>
<div style="left:1200px;top:503.8px;width:29px;height:1.2px;background:#47484c;"></div>
<div style="left:1200px;top:517.05px;width:29px;height:1.2px;background:#47484c;"></div>
<div style="left:1200px;top:530.3px;width:29px;height:1.2px;background:#47484c;"></div>
<div style="left:1200px;top:543.55px;width:29px;height:1.2px;background:#47484c;"></div>
<div style="left:1200px;top:556.8px;width:29px;height:1.2px;background:#47484c;"></div>
<div style="left:1200px;top:570.05px;width:29px;height:1.2px;background:#47484c;"></div>
<div style="left:1195px;top:583.8px;width:40px;height:1.2px;background:#47484c;"></div>
<div style="left:1212px;top:440px;width:6.1px;height:149.5px;background:#808082;border-radius:0 0 3px 3px;"></div>
<div style="left:1193px;top:421px;width:44px;height:21px;background:#1b1c1e;border-radius:3px;"></div>
<div style="left:1194px;top:429.8px;width:42px;height:3px;background:#a0a0a2;"></div>
<div style="left:1332px;top:450.8px;width:29px;height:1.2px;background:#47484c;"></div>
<div style="left:1332px;top:464.05px;width:29px;height:1.2px;background:#47484c;"></div>
<div style="left:1332px;top:477.3px;width:29px;height:1.2px;background:#47484c;"></div>
<div style="left:1332px;top:490.55px;width:29px;height:1.2px;background:#47484c;"></div>
<div style="left:1332px;top:503.8px;width:29px;height:1.2px;background:#47484c;"></div>
<div style="left:1332px;top:517.05px;width:29px;height:1.2px;background:#47484c;"></div>
<div style="left:1332px;top:530.3px;width:29px;height:1.2px;background:#47484c;"></div>
<div style="left:1332px;top:543.55px;width:29px;height:1.2px;background:#47484c;"></div>
<div style="left:1332px;top:556.8px;width:29px;height:1.2px;background:#47484c;"></div>
<div style="left:1332px;top:570.05px;width:29px;height:1.2px;background:#47484c;"></div>
<div style="left:1327px;top:583.8px;width:40px;height:1.2px;background:#47484c;"></div>
<div style="left:1344px;top:440px;width:6.1px;height:149.5px;background:#808082;border-radius:0 0 3px 3px;"></div>
<div style="left:1325px;top:421px;width:44px;height:21px;background:#1b1c1e;border-radius:3px;"></div>
<div style="left:1326px;top:429.8px;width:42px;height:3px;background:#a0a0a2;"></div>
<svg style="left:1260px;top:410px;" width="40" height="180" viewBox="0 0 40 180"><g fill="#1b1c1e"><rect x="7.2" y="2.0" width="3.7" height="5.2"/><rect x="7.2" y="10.0" width="3.7" height="5.2"/><rect x="7.2" y="18.0" width="3.7" height="5.2"/><rect x="7.2" y="26.1" width="3.7" height="5.2"/><rect x="7.2" y="34.1" width="3.7" height="5.2"/><rect x="7.2" y="42.1" width="3.7" height="5.2"/><rect x="7.2" y="50.1" width="3.7" height="5.2"/><rect x="7.2" y="58.1" width="3.7" height="5.2"/><rect x="7.2" y="66.2" width="3.7" height="5.2"/><rect x="7.2" y="74.2" width="3.7" height="5.2"/><rect x="7.2" y="82.2" width="3.7" height="5.2"/><rect x="7.2" y="90.2" width="3.7" height="5.2"/><rect x="7.2" y="98.2" width="3.7" height="5.2"/><rect x="7.2" y="106.3" width="3.7" height="5.2"/><rect x="7.2" y="114.3" width="3.7" height="5.2"/><rect x="7.2" y="122.3" width="3.7" height="5.2"/><rect x="7.2" y="130.3" width="3.7" height="5.2"/><rect x="7.2" y="138.3" width="3.7" height="5.2"/><rect x="7.2" y="146.4" width="3.7" height="5.2"/><rect x="7.2" y="154.4" width="3.7" height="5.2"/><rect x="7.2" y="162.4" width="3.7" height="5.2"/><rect x="7.2" y="170.4" width="3.7" height="5.2"/><rect x="13.2" y="2.0" width="3.7" height="5.2"/><rect x="13.2" y="10.0" width="3.7" height="5.2"/><rect x="13.2" y="18.0" width="3.7" height="5.2"/><rect x="13.2" y="26.1" width="3.7" height="5.2"/><rect x="13.2" y="34.1" width="3.7" height="5.2"/><rect x="13.2" y="42.1" width="3.7" height="5.2"/><rect x="13.2" y="50.1" width="3.7" height="5.2"/><rect x="13.2" y="58.1" width="3.7" height="5.2"/><rect x="13.2" y="66.2" width="3.7" height="5.2"/><rect x="13.2" y="74.2" width="3.7" height="5.2"/><rect x="13.2" y="82.2" width="3.7" height="5.2"/><rect x="13.2" y="90.2" width="3.7" height="5.2"/><rect x="13.2" y="98.2" width="3.7" height="5.2"/><rect x="13.2" y="106.3" width="3.7" height="5.2"/><rect x="13.2" y="114.3" width="3.7" height="5.2"/><rect x="13.2" y="122.3" width="3.7" height="5.2"/><rect x="13.2" y="130.3" width="3.7" height="5.2"/><rect x="13.2" y="138.3" width="3.7" height="5.2"/><rect x="13.2" y="146.4" width="3.7" height="5.2"/><rect x="13.2" y="154.4" width="3.7" height="5.2"/><rect x="13.2" y="162.4" width="3.7" height="5.2"/><rect x="13.2" y="170.4" width="3.7" height="5.2"/><rect x="25.2" y="2.0" width="3.7" height="5.2"/><rect x="25.2" y="10.0" width="3.7" height="5.2"/><rect x="25.2" y="18.0" width="3.7" height="5.2"/><rect x="25.2" y="26.1" width="3.7" height="5.2"/><rect x="25.2" y="34.1" width="3.7" height="5.2"/><rect x="25.2" y="42.1" width="3.7" height="5.2"/><rect x="25.2" y="50.1" width="3.7" height="5.2"/><rect x="25.2" y="58.1" width="3.7" height="5.2"/><rect x="25.2" y="66.2" width="3.7" height="5.2"/><rect x="25.2" y="74.2" width="3.7" height="5.2"/><rect x="25.2" y="82.2" width="3.7" height="5.2"/><rect x="25.2" y="90.2" width="3.7" height="5.2"/><rect x="25.2" y="98.2" width="3.7" height="5.2"/><rect x="25.2" y="106.3" width="3.7" height="5.2"/><rect x="25.2" y="114.3" width="3.7" height="5.2"/><rect x="25.2" y="122.3" width="3.7" height="5.2"/><rect x="25.2" y="130.3" width="3.7" height="5.2"/><rect x="25.2" y="138.3" width="3.7" height="5.2"/><rect x="25.2" y="146.4" width="3.7" height="5.2"/><rect x="25.2" y="154.4" width="3.7" height="5.2"/><rect x="25.2" y="162.4" width="3.7" height="5.2"/><rect x="25.2" y="170.4" width="3.7" height="5.2"/><rect x="32.3" y="2.0" width="3.7" height="5.2"/><rect x="32.3" y="10.0" width="3.7" height="5.2"/><rect x="32.3" y="18.0" width="3.7" height="5.2"/><rect x="32.3" y="26.1" width="3.7" height="5.2"/><rect x="32.3" y="34.1" width="3.7" height="5.2"/><rect x="32.3" y="42.1" width="3.7" height="5.2"/><rect x="32.3" y="50.1" width="3.7" height="5.2"/><rect x="32.3" y="58.1" width="3.7" height="5.2"/><rect x="32.3" y="66.2" width="3.7" height="5.2"/><rect x="32.3" y="74.2" width="3.7" height="5.2"/><rect x="32.3" y="82.2" width="3.7" height="5.2"/><rect x="32.3" y="90.2" width="3.7" height="5.2"/><rect x="32.3" y="98.2" width="3.7" height="5.2"/><rect x="32.3" y="106.3" width="3.7" height="5.2"/><rect x="32.3" y="114.3" width="3.7" height="5.2"/><rect x="32.3" y="122.3" width="3.7" height="5.2"/><rect x="32.3" y="130.3" width="3.7" height="5.2"/><rect x="32.3" y="138.3" width="3.7" height="5.2"/><rect x="32.3" y="146.4" width="3.7" height="5.2"/><rect x="32.3" y="154.4" width="3.7" height="5.2"/><rect x="32.3" y="162.4" width="3.7" height="5.2"/><rect x="32.3" y="170.4" width="3.7" height="5.2"/></g></svg>
<div style="left:1188px;top:608.3px;width:56px;height:34.4px;background:#2a2b2f;border:1px solid #2587ab;border-radius:3px;"></div>
<svg style="left:1207px;top:616px;" width="18" height="18" viewBox="0 0 18 18"><path d="M2 17V9A7 7 0 0 1 16 9V17" fill="none" stroke="#2e93b8" stroke-width="1.7"/><rect x="1" y="10" width="3.4" height="7.5" fill="#2e93b8"/><rect x="13.6" y="10" width="3.4" height="7.5" fill="#2e93b8"/></svg>
<div style="left:1317px;top:608.3px;width:56px;height:34.4px;background:#2a2b2f;border:1px solid #222326;border-radius:3px;"></div>
<svg style="left:1336px;top:616px;" width="18" height="18" viewBox="0 0 18 18"><path d="M2 17V9A7 7 0 0 1 16 9V17" fill="none" stroke="#88888a" stroke-width="1.7"/><rect x="1" y="10" width="3.4" height="7.5" fill="#88888a"/><rect x="13.6" y="10" width="3.4" height="7.5" fill="#88888a"/></svg>
<div style="left:1175.5px;top:672.5px;width:212.5px;height:58.5px;background:#303135;border:1px solid #26272a;border-radius:6px;"></div>
<div style="left:1193.1px;top:681px;width:1.4px;height:39.5px;background:#4c4d51;"></div>
<div style="left:1210.58px;top:688px;width:1.2px;height:27px;background:#47484c;"></div>
<div style="left:1227.96px;top:688px;width:1.2px;height:27px;background:#47484c;"></div>
<div style="left:1245.34px;top:688px;width:1.2px;height:27px;background:#47484c;"></div>
<div style="left:1262.72px;top:688px;width:1.2px;height:27px;background:#47484c;"></div>
<div style="left:1297.48px;top:688px;width:1.2px;height:27px;background:#47484c;"></div>
<div style="left:1314.86px;top:688px;width:1.2px;height:27px;background:#47484c;"></div>
<div style="left:1332.24px;top:688px;width:1.2px;height:27px;background:#47484c;"></div>
<div style="left:1349.62px;top:688px;width:1.2px;height:27px;background:#47484c;"></div>
<div style="left:1366.9px;top:681px;width:1.4px;height:39.5px;background:#4c4d51;"></div>
<div style="left:1192px;top:697.5px;width:179.3px;height:6.5px;background:#131315;border-radius:3px;"></div>
<div style="left:1271px;top:675px;width:21px;height:50.8px;background:#1b1c1e;border-radius:3px;"></div>
<div style="left:1280.3px;top:677px;width:2.3px;height:47px;background:#a4a4a6;"></div>
<div style="left:13px;top:743.6px;width:2534px;height:1.4px;background:#1f2022;"></div>
<div style="left:13px;top:745px;width:33px;height:273.5px;background:#37383b;border-left:1px solid #1d1e20;"></div>
<div style="left:16px;top:748.3px;width:28px;height:25.4px;background:#303135;border:1px solid #2a2b2e;"></div>
<svg style="left:18px;top:749px;" width="24" height="24" viewBox="0 0 24 24"><path d="M11.8 5.2L13.9 10L19 10.4L15.1 13.8L16.3 18.9L11.8 16.2L7.3 18.9L8.5 13.8L4.6 10.4L9.7 10Z" fill="#8a8a8c"/><circle cx="17" cy="16.4" r="3.1" fill="#303135" stroke="#8a8a8c" stroke-width="1"/><circle cx="17" cy="16.4" r="1.1" fill="#8a8a8c"/></svg>
<div style="left:16px;top:779.4px;width:28px;height:25.4px;background:#303135;border:1px solid #2a2b2e;"></div>
<svg style="left:18px;top:780.1px;" width="24" height="24" viewBox="0 0 24 24"><path d="M5 7H11L12 8H21V18.8H5Z" fill="#8a8a8c"/><circle cx="18.4" cy="15.8" r="3.1" fill="#303135" stroke="#8a8a8c" stroke-width="1"/><path d="M16.8 15.8H20M18.4 14.2V17.4" stroke="#8a8a8c" stroke-width="1"/></svg>
<div style="left:16px;top:810.3px;width:28px;height:25.4px;background:#303135;border:1px solid #2a2b2e;"></div>
<svg style="left:18px;top:811px;" width="24" height="24" viewBox="0 0 24 24"><path d="M5.6 7H19L13 13.5V19L11 20.5V13.5Z" fill="#8a8a8c"/><circle cx="17" cy="16.2" r="3.1" fill="#303135" stroke="#8a8a8c" stroke-width="1"/><circle cx="17" cy="16.2" r="1.1" fill="#8a8a8c"/></svg>
<div style="left:16px;top:841.1px;width:28px;height:25.4px;background:#303135;border:1px solid #2a2b2e;"></div>
<svg style="left:18px;top:841.8px;" width="24" height="24" viewBox="0 0 24 24"><path d="M2.7 10.5L8.6 6V9.2H20V20.3H10.3V17.8H17.2V11.8H8.6V15Z" fill="#8a8a8c"/></svg>
<div style="left:23.5px;top:934px;width:13px;height:13px;border-radius:50%;background:#1d1e20;"></div>
<div style="left:27.8px;top:938.3px;width:4.4px;height:4.4px;background:#5a5b5e;transform:rotate(45deg);"></div>
<div style="left:16px;top:958.4px;width:28px;height:25.2px;background:#303135;border:1px solid #2a2b2e;"></div>
<div class="t" style="left:23.5px;top:963.5px;font-size:12.5px;line-height:16px;color:#8a8a8c;font-weight:bold;">A</div>
<svg style="left:35.5px;top:969px;" width="4" height="5" viewBox="0 0 4 5"><path d="M0 0L3 2L0 4Z" fill="#8a8a8c"/></svg>
<div style="left:16px;top:989.3px;width:28px;height:25.4px;background:#303135;border:1px solid #2a2b2e;"></div>
<svg style="left:18px;top:990px;" width="24" height="24" viewBox="0 0 24 24"><path d="M5 6.5H19V9H5Z" fill="#8a8a8c"/><path d="M5 7V18.5H19V14" fill="none" stroke="#8a8a8c" stroke-width="1.6"/><path d="M10 17L17.5 11M13 10.5H18V15" fill="none" stroke="#8a8a8c" stroke-width="1.6"/></svg>
<div style="left:46px;top:745px;width:383px;height:273px;background:#111113;overflow:hidden;"></div>
<div style="left:46px;top:811.5px;width:383px;height:21.5px;background:#3a3b3f;"></div>
<div style="left:429px;top:744.5px;width:1.2px;height:273.5px;background:#858587;"></div>
<div style="left:46px;top:745px;width:383px;height:273px;overflow:hidden;"><div style="left:3.4px;top:10.3px;width:6.2px;height:2.2px;background:#dcdcdc;"></div><div style="left:14px;top:2.9px;width:8.3px;height:1.2px;background:#e0e0e0;opacity:0.85;"></div><div style="left:14px;top:4.9px;width:18.2px;height:14.8px;background:#e0e0e0;"></div><svg style="left:14px;top:3.7px;" width="18.4" height="15.5" viewBox="0 0 18.4 15.5"><rect x="4" y="3" width="10.4" height="7" fill="none" stroke="#8a8a8a" stroke-width="1.4"/><path d="M9.2 10V12.6M6 12.8H12.4" stroke="#8a8a8a" stroke-width="1.2"/></svg><div class="t" style="left:36.5px;top:0.5px;font-size:17px;line-height:22px;color:#cfcfd1;">Local Music</div><div style="left:16.9px;top:32.3px;width:6.2px;height:2.2px;background:#dcdcdc;"></div><div style="left:28px;top:24.9px;width:8.3px;height:1.2px;background:#1fb5f0;opacity:0.85;"></div><div style="left:28px;top:26.9px;width:18.2px;height:14.8px;background:#1fb5f0;"></div><svg style="left:30px;top:26.7px;" width="14" height="14" viewBox="0 0 14 14"><path d="M5 2.2L12 1V9.6A2.2 1.9 0 1 1 10.6 7.9V3.6L6.4 4.4V11A2.2 1.9 0 1 1 5 9.3Z" fill="#000"/></svg><div class="t" style="left:50.5px;top:22.5px;font-size:17px;line-height:22px;color:#cfcfd1;">Músicas</div><div style="left:42.2px;top:46.9px;width:8.3px;height:1.2px;background:#dcdcdc;opacity:0.85;"></div><div style="left:42.2px;top:48.9px;width:18.2px;height:14.8px;background:#dcdcdc;"></div><div class="t" style="left:64.6px;top:44.5px;font-size:17px;line-height:22px;color:#cfcfd1;">Audios Soundpad</div><div style="left:42.2px;top:68.9px;width:8.3px;height:1.2px;background:#dcdcdc;opacity:0.85;"></div><div style="left:42.2px;top:70.9px;width:18.2px;height:14.8px;background:#dcdcdc;"></div><div class="t" style="left:64.6px;top:66.5px;font-size:17px;line-height:22px;color:#cfcfd1;">musics</div><div style="left:42.2px;top:90.9px;width:8.3px;height:1.2px;background:#dcdcdc;opacity:0.85;"></div><div style="left:42.2px;top:92.9px;width:18.2px;height:14.8px;background:#dcdcdc;"></div><div class="t" style="left:64.6px;top:88.5px;font-size:17px;line-height:22px;color:#cfcfd1;">Test musics</div><div style="left:31px;top:120.45px;width:6px;height:1.5px;background:#d8d8d8;"></div><div style="left:33.25px;top:118.2px;width:1.5px;height:6px;background:#d8d8d8;"></div><div style="left:42.2px;top:112.9px;width:8.3px;height:1.2px;background:#dcdcdc;opacity:0.85;"></div><div style="left:42.2px;top:114.9px;width:18.2px;height:14.8px;background:#dcdcdc;"></div><div class="t" style="left:64.6px;top:110.5px;font-size:17px;line-height:22px;color:#cfcfd1;">Unknown Worlds</div><div style="left:17px;top:142.45px;width:6px;height:1.5px;background:#d8d8d8;"></div><div style="left:19.25px;top:140.2px;width:1.5px;height:6px;background:#d8d8d8;"></div><div style="left:28px;top:134.9px;width:8.3px;height:1.2px;background:#f63cf0;opacity:0.85;"></div><div style="left:28px;top:136.9px;width:18.2px;height:14.8px;background:#f63cf0;"></div><svg style="left:32px;top:138.6px;" width="11" height="12" viewBox="0 0 11 12"><rect x="1.2" y="1" width="7.8" height="9.4" fill="none" stroke="#000" stroke-width="2"/><path d="M1.2 5.7H9" stroke="#000" stroke-width="1.8"/><path d="M0 3.4H10.2M0 8H10.2" stroke="#f63cf0" stroke-width="0.9" stroke-dasharray="2.2 5.8"/></svg><div class="t" style="left:50.5px;top:132.5px;font-size:17px;line-height:22px;color:#cfcfd1;">Vídeos</div><div style="left:17px;top:164.45px;width:6px;height:1.5px;background:#d8d8d8;"></div><div style="left:19.25px;top:162.2px;width:1.5px;height:6px;background:#d8d8d8;"></div><div style="left:28px;top:156.9px;width:8.3px;height:1.2px;background:#e0e0e0;opacity:0.85;"></div><div style="left:28px;top:158.9px;width:18.2px;height:14.8px;background:#e0e0e0;"></div><svg style="left:28px;top:157.7px;" width="18.4" height="15.5" viewBox="0 0 18.4 15.5"><rect x="4" y="3" width="10.4" height="7" fill="none" stroke="#8a8a8a" stroke-width="1.4"/><path d="M9.2 10V12.6M6 12.8H12.4" stroke="#8a8a8a" stroke-width="1.2"/></svg><div class="t" style="left:50.5px;top:154.5px;font-size:17px;line-height:22px;color:#cfcfd1;">Drives</div><div style="left:17px;top:186.45px;width:6px;height:1.5px;background:#d8d8d8;"></div><div style="left:19.25px;top:184.2px;width:1.5px;height:6px;background:#d8d8d8;"></div><div style="left:28px;top:178.9px;width:8.3px;height:1.2px;background:#d8d8d8;opacity:0.85;"></div><div style="left:28px;top:180.9px;width:18.2px;height:14.8px;border:1.5px solid #d8d8d8;background:#111113;"></div><div style="left:31.5px;top:183.2px;width:11.4px;height:8.2px;background:#e0e0e0;"></div><div style="left:31.5px;top:188.8px;width:11.4px;height:1px;background:#333;"></div><div class="t" style="left:50.5px;top:176.5px;font-size:17px;line-height:22px;color:#cfcfd1;">Área de Trabalho</div><div style="left:3.5px;top:208.45px;width:6px;height:1.5px;background:#d8d8d8;"></div><div style="left:5.75px;top:206.2px;width:1.5px;height:6px;background:#d8d8d8;"></div><div style="left:14px;top:200.9px;width:8.3px;height:1.2px;background:#d8202a;opacity:0.85;"></div><div style="left:14px;top:202.9px;width:18.2px;height:14.8px;border:1.5px solid #d8202a;background:#111113;"></div><svg style="left:17.7px;top:204.2px;" width="11" height="11" viewBox="0 0 11 11"><circle cx="5.5" cy="5.5" r="4.8" fill="#d8202a"/><path d="M0.7 5.5H10.3M5.5 0.7V10.3M2.6 1.8Q4.6 5.5 2.6 9.2M8.4 1.8Q6.4 5.5 8.4 9.2" stroke="#111113" stroke-width="0.7" fill="none"/></svg><div class="t" style="left:36.5px;top:198.5px;font-size:17px;line-height:22px;color:#cfcfd1;">Online Music</div><div style="left:3.5px;top:230.45px;width:6px;height:1.5px;background:#d8d8d8;"></div><div style="left:5.75px;top:228.2px;width:1.5px;height:6px;background:#d8d8d8;"></div><div style="left:14px;top:222.9px;width:8.3px;height:1.2px;background:#d8d8d8;opacity:0.85;"></div><div style="left:14px;top:224.9px;width:18.2px;height:14.8px;border:1.5px solid #d8d8d8;background:#111113;"></div><div style="left:17.4px;top:226.7px;width:1.6px;height:1.4px;background:#e0e0e0;"></div><div style="left:20.2px;top:226.7px;width:8.8px;height:1.4px;background:#e0e0e0;"></div><div style="left:17.4px;top:230.3px;width:1.6px;height:1.4px;background:#e0e0e0;"></div><div style="left:20.2px;top:230.3px;width:8.8px;height:1.4px;background:#e0e0e0;"></div><div style="left:17.4px;top:233.9px;width:1.6px;height:1.4px;background:#e0e0e0;"></div><div style="left:20.2px;top:233.9px;width:8.8px;height:1.4px;background:#e0e0e0;"></div><div class="t" style="left:36.5px;top:220.5px;font-size:17px;line-height:22px;color:#cfcfd1;">Lists &amp; Advice</div><div style="left:3.5px;top:252.45px;width:6px;height:1.5px;background:#d8d8d8;"></div><div style="left:5.75px;top:250.2px;width:1.5px;height:6px;background:#d8d8d8;"></div><div style="left:14px;top:244.9px;width:8.3px;height:1.2px;background:#22a6e0;opacity:0.85;"></div><div style="left:14px;top:246.9px;width:18.2px;height:14.8px;border:1.5px solid #22a6e0;background:#111113;"></div><svg style="left:17px;top:247.2px;" width="13" height="13" viewBox="0 0 13 13"><circle cx="8" cy="5" r="3.1" fill="none" stroke="#22a6e0" stroke-width="1.4"/><path d="M5.8 7.2L1.5 11.5" stroke="#22a6e0" stroke-width="1.6"/><circle cx="9.5" cy="9.8" r="1.4" fill="#22a6e0"/></svg><div class="t" style="left:36.5px;top:242.5px;font-size:17px;line-height:22px;color:#cfcfd1;">Filters</div><div style="left:3.5px;top:274.45px;width:6px;height:1.5px;background:#d8d8d8;"></div><div style="left:5.75px;top:272.2px;width:1.5px;height:6px;background:#d8d8d8;"></div><div style="left:14px;top:266.9px;width:8.3px;height:1.2px;background:#d02860;opacity:0.85;"></div><div style="left:14px;top:268.9px;width:18.2px;height:14.8px;border:1.5px solid #d02860;background:#111113;"></div><div class="t" style="left:36.5px;top:264.5px;font-size:17px;line-height:22px;color:#cfcfd1;">CD | Export</div></div>
<div style="left:430.5px;top:745px;width:1148.5px;height:273px;background:#111113;"></div>
<div style="left:430.5px;top:745px;width:1148.5px;height:34px;background:#38393d;"></div>
<div style="left:430.5px;top:840.5px;width:12.8px;height:80.2px;background:#4a4b4f;border-radius:0 7px 7px 0;"></div>
<div class="rot c" style="left:396.9px;top:872.6px;width:80px;height:16px;font-size:12px;font-weight:bold;color:#dcdcde;transform:rotate(90deg);">folders</div>
<svg style="left:439px;top:754px;" width="16" height="18" viewBox="0 0 16 18"><circle cx="9.4" cy="7.5" r="4.7" fill="none" stroke="#9a9a9c" stroke-width="1.4"/><path d="M6.2 11L1.2 16.1" stroke="#9a9a9c" stroke-width="1.5"/></svg>
<div style="left:461px;top:749px;width:400px;height:26px;background:#111214;border:1px solid #98989a;"></div>
<svg style="left:867px;top:754px;" width="16" height="16" viewBox="0 0 16 16"><circle cx="8.4" cy="8" r="6.3" fill="#232427"/><circle cx="8.4" cy="8" r="2" fill="#5a5b5e"/></svg>
<div class="t" style="left:888.8px;top:753.3px;font-size:14px;line-height:18px;color:#c0c0c2;">2 files</div>
<div style="left:1547px;top:750.2px;width:28px;height:23.8px;background:#3a3b3e;border:1px solid #2c2d30;"></div>
<svg style="left:1551px;top:755px;" width="21" height="14" viewBox="0 0 21 14"><path d="M1 2H12M1 6.8H12M1 11.6H12" stroke="#9a9a9c" stroke-width="1.8"/><path d="M14.6 1.2H16.2V7H19.2L16 12.6H14.6Z" fill="#9a9a9c"/></svg>
<div style="left:443px;top:781px;width:1121.5px;height:19px;background:#37383c;"></div>
<div style="left:430.5px;top:779.5px;width:1148.5px;height:1.5px;background:#17181a;"></div>
<div style="left:462.5px;top:781px;width:1px;height:19px;background:#232427;"></div>
<div style="left:738.5px;top:781px;width:1px;height:19px;background:#232427;"></div>
<div style="left:1014.5px;top:781px;width:1px;height:19px;background:#232427;"></div>
<div style="left:1234.5px;top:781px;width:1px;height:19px;background:#232427;"></div>
<div style="left:1344.5px;top:781px;width:1px;height:19px;background:#232427;"></div>
<div style="left:1454.2px;top:781px;width:1px;height:19px;background:#232427;"></div>
<div class="t" style="left:466.5px;top:782px;font-size:14px;line-height:18px;color:#a2a2a4;">Title</div>
<div class="t" style="left:742px;top:782px;font-size:14px;line-height:18px;color:#a2a2a4;">Artist</div>
<div class="t" style="left:1018px;top:782px;font-size:14px;line-height:18px;color:#a2a2a4;">Remix</div>
<div class="t" style="left:1238px;top:782px;font-size:14px;line-height:18px;color:#a2a2a4;">Length</div>
<div class="t" style="left:1348px;top:782px;font-size:14px;line-height:18px;color:#a2a2a4;">Bpm</div>
<div class="t" style="left:1458px;top:782px;font-size:14px;line-height:18px;color:#a2a2a4;">Key</div>
<div style="left:463px;top:800.7px;width:1101.5px;height:25.3px;background:#4a4b4f;"></div>
<div style="left:463px;top:826.8px;width:1101.5px;height:24.4px;background:#232427;"></div>
<svg style="left:444.5px;top:804.3px;" width="17.5" height="18.5" viewBox="0 0 16 17"><path d="M4.6 2.6L11 1.2V11.2A2.3 2 0 1 1 9.6 9.4V4.2L6 5V12.6A2.3 2 0 1 1 4.6 10.8Z" fill="#e8e8e8"/><path d="M11.3 0L12.5 2.9L15.6 3.1L13.2 5.1L14 8.1L11.3 6.4L8.6 8.1L9.4 5.1L7 3.1L10.1 2.9Z" fill="#3cf04a"/></svg>
<svg style="left:444.5px;top:830px;" width="17.5" height="18.5" viewBox="0 0 16 17"><path d="M4.6 2.6L11 1.2V11.2A2.3 2 0 1 1 9.6 9.4V4.2L6 5V12.6A2.3 2 0 1 1 4.6 10.8Z" fill="#e8e8e8"/><path d="M11.3 0L12.5 2.9L15.6 3.1L13.2 5.1L14 8.1L11.3 6.4L8.6 8.1L9.4 5.1L7 3.1L10.1 2.9Z" fill="#3cf04a"/></svg>
<div class="t" style="left:464px;top:803px;font-size:17px;line-height:22px;color:#d8d8da;transform:scaleX(0.666);transform-origin:left center;">FEUERSCHWANZ Warriors Of The World United feat</div>
<div class="t" style="left:464px;top:829px;font-size:17px;line-height:22px;color:#dcdcde;">Musica The Walking Dead</div>
<div class="t" style="left:1239.5px;width:100px;text-align:right;top:803px;font-size:17px;line-height:22px;color:#d6d6d8;">06:01</div>
<div class="t" style="left:1239.5px;width:100px;text-align:right;top:829px;font-size:17px;line-height:22px;color:#d6d6d8;">01:27</div>
<div class="t" style="left:1348.5px;width:100px;text-align:right;top:803px;font-size:17px;line-height:22px;color:#d6d6d8;">86.0</div>
<div class="t" style="left:1348.5px;width:100px;text-align:right;top:829px;font-size:17px;line-height:22px;color:#d6d6d8;">91.3</div>
<div class="t" style="left:1456px;top:803px;font-size:17px;line-height:22px;color:#d6d6d8;">Bm</div>
<div class="t" style="left:1456px;top:829px;font-size:17px;line-height:22px;color:#d6d6d8;">Gm</div>
<div style="left:1566px;top:840.5px;width:13px;height:80.2px;background:#4a4b4f;border-radius:7px 0 0 7px;"></div>
<div class="rot c" style="left:1532.5px;top:872.6px;width:80px;height:16px;font-size:12px;font-weight:bold;color:#dcdcde;transform:rotate(-90deg);">sideview</div>
<div style="left:1579.2px;top:745px;width:1.1px;height:273px;background:#98989a;"></div>
<div style="left:1580.5px;top:745px;width:616px;height:34px;background:#35363a;"></div>
<div style="left:1583px;top:747px;width:30px;height:30px;background:#111113;"></div>
<svg style="left:1587px;top:753px;" width="22" height="19" viewBox="0 0 22 19"><path d="M1.5 2H8.5L10 4H20.5V17.5H1.5Z" fill="#9a9a9c"/><path d="M11 5.6L12.6 9.3L16.6 9.6L13.6 12.2L14.5 16.1L11 14L7.5 16.1L8.4 12.2L5.4 9.6L9.4 9.3Z" fill="#111113"/></svg>
<div class="t" style="left:1620px;top:749.8px;font-size:19.5px;line-height:25px;color:#c4c4c6;letter-spacing:-0.3px;">SIDEVIEW</div>
<div style="left:1580.5px;top:779px;width:616px;height:205px;background:#111113;"></div>
<svg style="left:1854px;top:826px;" width="58" height="56" viewBox="0 0 58 56"><path d="M3 4Q3 2 5 2H19Q21 2 21.6 4L22.6 8H52Q55 8 55 11V30" fill="none" stroke="#292a2d" stroke-width="4"/><path d="M3 3V43Q3 47 7 47H32" fill="none" stroke="#292a2d" stroke-width="4"/><path d="M2 3H22V8H2Z" fill="#292a2d"/><circle cx="44.5" cy="43" r="11" fill="#292a2d"/><path d="M38 43H51M44.5 36.5V49.5" stroke="#111113" stroke-width="3.2"/></svg>
<div class="t" style="left:1631.7px;width:500px;text-align:center;top:892px;font-size:17px;line-height:22px;color:#8e8e90;font-weight:bold;">DRAG AND DROP ANY FOLDER HERE</div>
<div class="t" style="left:1631.7px;width:500px;text-align:center;top:921.8px;font-size:17px;line-height:22px;color:#7a7a7c;">OR USE THE BUTTONS BELOW</div>
<div style="left:1580.5px;top:984px;width:616px;height:34px;background:#35363a;"></div>
<div style="left:1686.3px;top:986px;width:1px;height:29px;background:#47484c;"></div>
<div style="left:1796.3px;top:986px;width:1px;height:29px;background:#47484c;"></div>
<div style="left:1906.4px;top:986px;width:1px;height:29px;background:#47484c;"></div>
<div style="left:2016.4px;top:986px;width:1px;height:29px;background:#47484c;"></div>
<div style="left:2126.5px;top:986px;width:1px;height:29px;background:#47484c;"></div>
<div style="left:2155.4px;top:986px;width:1px;height:29px;background:#47484c;"></div>
<div class="t" style="left:1610px;top:991.6px;font-size:13.5px;line-height:18px;color:#cacacc;letter-spacing:-0.25px;">Sidelist</div>
<div class="t" style="left:1720.3px;top:991.6px;font-size:13.5px;line-height:18px;color:#cacacc;letter-spacing:-0.25px;">Remixes</div>
<div class="t" style="left:1830.4px;top:991.6px;font-size:13.5px;line-height:18px;color:#cacacc;letter-spacing:-0.25px;">Sampler</div>
<div class="t" style="left:1940px;top:991.6px;font-size:13.5px;line-height:18px;color:#cacacc;letter-spacing:-0.25px;">Automix</div>
<div class="t" style="left:2050.2px;top:991.6px;font-size:13.5px;line-height:18px;color:#cacacc;letter-spacing:-0.25px;">Karaoke</div>
<svg style="left:1585px;top:992px;" width="18" height="18" viewBox="0 0 18 18"><path d="M1 4.5H9M1 8H9M1 11.5H7" stroke="#8a8a8c" stroke-width="1.5"/><path d="M12 3V13.5" stroke="#8a8a8c" stroke-width="1.5"/><path d="M12 3L15.5 5.5V7.5L12 5.4Z" fill="#8a8a8c"/><ellipse cx="10.2" cy="14" rx="2.4" ry="1.9" fill="#8a8a8c"/></svg>
<svg style="left:1694px;top:991px;" width="20" height="19" viewBox="0 0 20 19"><circle cx="10" cy="9.5" r="3" fill="none" stroke="#8a8a8c" stroke-width="1.6"/><path d="M7.8 7.3L3 2.5M12.2 7.3L17 2.5M7.8 11.7L3 16.5M12.2 11.7L17 16.5" stroke="#8a8a8c" stroke-width="1.5"/><circle cx="2.5" cy="2.2" r="1.5" fill="#8a8a8c"/><circle cx="17.5" cy="2.2" r="1.5" fill="#8a8a8c"/><circle cx="2.5" cy="16.8" r="1.5" fill="#8a8a8c"/><circle cx="17.5" cy="16.8" r="1.5" fill="#8a8a8c"/></svg>
<svg style="left:1803.5px;top:995px;" width="20" height="12" viewBox="0 0 20 12"><rect x="0.5" y="0.6" width="5" height="4.6" fill="#8a8a8c"/><rect x="7.1" y="0.6" width="5" height="4.6" fill="#8a8a8c"/><rect x="13.7" y="0.6" width="5" height="4.6" fill="#8a8a8c"/><rect x="0.5" y="6.4" width="5" height="4.6" fill="#8a8a8c"/><rect x="7.1" y="6.4" width="5" height="4.6" fill="#8a8a8c"/><rect x="13.7" y="6.4" width="5" height="4.6" fill="#8a8a8c"/></svg>
<svg style="left:1915px;top:992px;" width="18" height="17" viewBox="0 0 18 17"><path d="M1 4.5H4.5L10.5 12.5H14M1 12.5H4.5L6.3 10.2M8.8 6.8L10.5 4.5H14" fill="none" stroke="#8a8a8c" stroke-width="1.6"/><path d="M13 1.5L17 4.5L13 7.5ZM13 9.5L17 12.5L13 15.5Z" fill="#8a8a8c"/></svg>
<svg style="left:2027px;top:991px;" width="14" height="20" viewBox="0 0 14 20"><rect x="4.5" y="1" width="5" height="10" rx="2.5" fill="#8a8a8c"/><path d="M2 8.5V9.5A5 5 0 0 0 12 9.5V8.5M7 14.5V17.5M4 18H10" fill="none" stroke="#8a8a8c" stroke-width="1.4"/></svg>
<svg style="left:2133px;top:993px;" width="18" height="15" viewBox="0 0 18 15"><path d="M1 2.5H9M1 6.5H7M1 10.5H7M1 13.5H9" stroke="#8a8a8c" stroke-width="1.4"/><path d="M8.5 6.2H12.5V3.5L17 7.5L12.5 11.5V8.8H8.5Z" fill="#8a8a8c"/></svg>
<div style="left:2184px;top:840.5px;width:12.5px;height:80.2px;background:#4a4b4f;border-radius:7px 0 0 7px;"></div>
<div class="rot c" style="left:2150.25px;top:872.6px;width:80px;height:16px;font-size:12px;font-weight:bold;color:#dcdcde;transform:rotate(-90deg);">info</div>
<div style="left:2196.8px;top:745px;width:1.1px;height:273px;background:#98989a;"></div>
<div style="left:2198px;top:745px;width:347.5px;height:273px;background:#35363a;"></div>
<div style="left:2545.5px;top:745px;width:13.5px;height:274.5px;background:#2e2f33;border-left:2px solid #151618;"></div>
<div style="left:2198px;top:1017.5px;width:349.5px;height:2px;background:#151618;"></div>
<div style="left:2210px;top:749px;width:295px;height:22px;background:#050607;border:1px solid #6a6b6e;"></div>
<div style="left:2211px;top:750px;width:20.5px;height:20px;background:#5a5b5f;"></div>
<svg style="left:2217.5px;top:755.3px;" width="8" height="9" viewBox="0 0 8 9"><path d="M0.4 0.4L7 4.3L0.4 8.2Z" fill="#d0d0d2"/></svg>
<svg style="left:2232px;top:750.5px;" width="271.5" height="20" viewBox="0 0 271.5 20"><path d="M0 7.8L1 7.7L2 2.5L3 3.2L4 8.1L5 8.1L6 3.7L7 4.0L8 3.4L9 3.5L10 3.0L11 3.1L12 4.0L13 3.8L14 4.0L15 3.4L16 3.5L17 4.1L18 3.4L19 3.8L20 3.6L21 3.2L22 3.9L23 3.5L24 3.3L25 3.0L26 3.7L27 4.0L28 4.1L29 3.3L30 3.1L31 3.3L32 1.5L33 1.1L34 1.7L35 2.3L36 1.4L37 1.1L38 1.8L39 2.4L40 2.2L41 2.3L42 2.2L43 1.8L44 2.3L45 1.5L46 1.1L47 2.0L48 1.9L49 0.9L50 2.2L51 2.2L52 1.6L53 2.6L54 2.0L55 1.0L56 1.7L57 1.5L58 1.1L59 1.2L60 1.9L61 2.4L62 2.5L63 2.2L64 2.0L65 2.6L66 2.4L67 2.5L68 1.6L69 2.2L70 2.0L71 1.2L72 1.8L73 2.4L74 2.0L75 1.2L76 2.5L77 1.7L78 1.7L79 1.7L80 1.2L81 2.2L82 2.3L83 1.7L84 2.0L85 1.3L86 1.2L87 1.3L88 2.2L89 2.0L90 2.5L91 2.2L92 1.0L93 1.1L94 1.0L95 2.2L96 2.3L97 1.6L98 1.2L99 1.5L100 2.4L101 1.1L102 1.4L103 2.3L104 2.0L105 2.4L106 3.2L107 2.8L108 3.6L109 2.5L110 3.5L111 2.4L112 3.3L113 3.5L114 2.4L115 3.0L116 3.1L117 2.6L118 3.4L119 3.4L120 3.4L121 3.5L122 3.3L123 2.9L124 3.2L125 3.1L126 3.0L127 3.1L128 3.7L129 3.5L130 2.8L131 3.3L132 3.0L133 3.6L134 3.4L135 2.7L136 3.0L137 2.5L138 2.9L139 3.0L140 3.1L141 3.1L142 1.3L143 0.9L144 1.5L145 1.1L146 2.2L147 2.3L148 2.3L149 1.2L150 2.2L151 1.4L152 1.0L153 2.1L154 1.8L155 0.8L156 2.2L157 1.6L158 2.1L159 1.3L160 1.5L161 2.4L162 1.4L163 2.3L164 1.1L165 2.3L166 2.4L167 2.0L168 1.7L169 1.1L170 2.2L171 1.5L172 2.3L173 1.3L174 2.3L175 1.4L176 2.3L177 2.3L178 1.7L179 1.5L180 2.0L181 1.6L182 2.3L183 2.4L184 1.9L185 1.2L186 1.6L187 1.9L188 2.0L189 1.2L190 2.1L191 0.9L192 1.1L193 1.6L194 1.8L195 1.3L196 1.9L197 1.3L198 1.8L199 2.4L200 2.3L201 2.0L202 2.3L203 1.0L204 2.0L205 2.0L206 2.2L207 2.0L208 0.8L209 2.0L210 1.9L211 2.4L212 1.7L213 2.1L214 2.4L215 2.3L216 2.4L217 1.9L218 1.5L219 1.2L220 1.3L221 1.8L222 0.8L223 1.3L224 2.4L225 1.0L226 1.2L227 2.2L228 1.6L229 1.1L230 1.5L231 1.3L232 2.1L233 2.2L234 2.3L235 1.5L236 1.4L237 1.6L238 1.1L239 1.6L240 1.4L241 1.2L242 2.3L243 1.2L244 1.2L245 1.6L246 1.7L247 1.2L248 1.4L249 2.2L250 1.2L251 1.5L252 2.8L253 3.3L254 4.8L255 6.4L256 7.8L257 7.6L258 7.6L259 2.5L260 1.3L261 1.8L262 2.2L263 2.2L264 2.3L265 1.0L266 1.3L267 1.1L268 2.2L269 1.8L270 2.6L271 1.8L271 16.0L270 15.3L269 16.0L268 15.6L267 16.7L266 16.6L265 16.8L264 15.5L263 15.6L262 15.6L261 16.0L260 16.6L259 15.3L258 10.4L257 10.4L256 10.2L255 11.6L254 13.1L253 14.5L252 15.1L251 16.3L250 16.6L249 15.6L248 16.4L247 16.6L246 16.2L245 16.2L244 16.6L243 16.6L242 15.5L241 16.6L240 16.5L239 16.2L238 16.7L237 16.2L236 16.4L235 16.3L234 15.6L233 15.6L232 15.8L231 16.5L230 16.3L229 16.7L228 16.2L227 15.6L226 16.6L225 16.8L224 15.5L223 16.6L222 17.0L221 16.0L220 16.5L219 16.6L218 16.3L217 15.9L216 15.5L215 15.5L214 15.4L213 15.7L212 16.2L211 15.4L210 15.9L209 15.8L208 17.0L207 15.8L206 15.7L205 15.9L204 15.9L203 16.8L202 15.5L201 15.8L200 15.5L199 15.5L198 16.0L197 16.5L196 15.9L195 16.5L194 16.0L193 16.2L192 16.7L191 16.9L190 15.7L189 16.6L188 15.8L187 16.0L186 16.2L185 16.6L184 15.9L183 15.5L182 15.6L181 16.2L180 15.8L179 16.3L178 16.1L177 15.5L176 15.5L175 16.4L174 15.5L173 16.5L172 15.5L171 16.3L170 15.6L169 16.7L168 16.1L167 15.8L166 15.5L165 15.6L164 16.7L163 15.5L162 16.4L161 15.4L160 16.3L159 16.6L158 15.7L157 16.2L156 15.7L155 17.0L154 16.0L153 15.8L152 16.8L151 16.5L150 15.6L149 16.7L148 15.5L147 15.5L146 15.6L145 16.7L144 16.3L143 16.9L142 16.5L141 14.8L140 14.7L139 14.8L138 14.9L137 15.3L136 14.9L135 15.1L134 14.5L133 14.3L132 14.9L131 14.6L130 15.1L129 14.4L128 14.2L127 14.7L126 14.8L125 14.8L124 14.7L123 14.9L122 14.6L121 14.3L120 14.5L119 14.5L118 14.5L117 15.2L116 14.7L115 14.8L114 15.4L113 14.3L112 14.6L111 15.4L110 14.3L109 15.3L108 14.3L107 15.1L106 14.7L105 15.4L104 15.8L103 15.6L102 16.4L101 16.7L100 15.4L99 16.3L98 16.6L97 16.3L96 15.6L95 15.6L94 16.8L93 16.7L92 16.8L91 15.7L90 15.3L89 15.8L88 15.6L87 16.6L86 16.6L85 16.5L84 15.8L83 16.1L82 15.5L81 15.7L80 16.6L79 16.1L78 16.1L77 16.1L76 15.3L75 16.6L74 15.8L73 15.4L72 16.0L71 16.6L70 15.8L69 15.7L68 16.2L67 15.3L66 15.4L65 15.3L64 15.8L63 15.6L62 15.4L61 15.4L60 15.9L59 16.6L58 16.7L57 16.3L56 16.1L55 16.8L54 15.9L53 15.3L52 16.2L51 15.6L50 15.7L49 16.9L48 16.0L47 15.8L46 16.7L45 16.3L44 15.5L43 16.0L42 15.6L41 15.5L40 15.7L39 15.4L38 16.0L37 16.7L36 16.4L35 15.5L34 16.2L33 16.7L32 16.3L31 14.5L30 14.7L29 14.6L28 13.8L27 13.9L26 14.2L25 14.9L24 14.6L23 14.3L22 14.0L21 14.6L20 14.2L19 14.1L18 14.5L17 13.8L16 14.3L15 14.5L14 13.9L13 14.1L12 13.9L11 14.7L10 14.9L9 14.4L8 14.4L7 13.8L6 14.2L5 9.9L4 9.9L3 14.7L2 15.4L1 10.3L0 10.2Z" fill="#0c4866"/><path d="M0 8.3L1 8.3L2 5.4L3 5.3L4 8.4L5 8.4L6 5.7L7 6.0L8 5.7L9 5.9L10 6.1L11 6.0L12 6.1L13 5.7L14 5.9L15 6.0L16 6.1L17 6.0L18 5.9L19 5.8L20 6.0L21 5.8L22 5.9L23 5.7L24 6.0L25 6.1L26 5.8L27 5.9L28 5.8L29 5.9L30 6.0L31 5.8L32 3.6L33 3.1L34 3.4L35 3.3L36 3.1L37 3.7L38 3.4L39 3.6L40 3.9L41 3.3L42 3.7L43 3.2L44 3.6L45 3.2L46 3.2L47 3.6L48 3.2L49 3.8L50 3.8L51 4.9L52 5.0L53 4.9L54 4.8L55 4.7L56 4.8L57 5.2L58 4.7L59 4.7L60 4.9L61 4.8L62 5.1L63 5.1L64 5.2L65 5.1L66 4.9L67 4.6L68 5.1L69 5.0L70 5.1L71 4.5L72 4.9L73 5.1L74 5.0L75 5.1L76 4.6L77 5.1L78 5.2L79 4.5L80 4.7L81 4.9L82 4.7L83 4.7L84 5.0L85 4.5L86 4.7L87 4.7L88 4.8L89 5.2L90 5.0L91 4.7L92 4.9L93 4.5L94 4.9L95 5.0L96 5.1L97 4.6L98 4.9L99 4.7L100 4.7L101 4.7L102 4.9L103 4.7L104 4.7L105 5.7L106 5.3L107 5.8L108 5.8L109 5.4L110 5.4L111 5.5L112 5.6L113 5.9L114 5.5L115 5.4L116 5.4L117 5.8L118 5.7L119 5.5L120 5.6L121 5.4L122 5.6L123 5.4L124 5.4L125 5.6L126 5.9L127 5.8L128 5.4L129 5.6L130 5.6L131 5.6L132 5.4L133 5.6L134 5.7L135 5.6L136 5.5L137 5.6L138 5.6L139 5.5L140 5.6L141 5.4L142 4.3L143 4.7L144 4.2L145 4.8L146 4.6L147 4.7L148 4.4L149 4.3L150 4.4L151 4.8L152 4.2L153 4.2L154 4.6L155 4.3L156 4.6L157 4.7L158 4.7L159 4.9L160 4.6L161 4.7L162 4.6L163 4.2L164 4.2L165 4.7L166 4.4L167 4.8L168 4.3L169 4.7L170 4.3L171 4.4L172 4.9L173 4.6L174 4.2L175 4.3L176 4.3L177 4.3L178 4.7L179 4.3L180 4.8L181 4.7L182 4.8L183 4.8L184 4.7L185 4.7L186 4.8L187 4.9L188 4.9L189 4.5L190 4.6L191 4.8L192 4.6L193 4.3L194 4.6L195 4.2L196 4.3L197 4.5L198 4.7L199 4.8L200 4.4L201 4.8L202 4.3L203 4.4L204 4.7L205 4.6L206 4.6L207 4.2L208 4.5L209 4.2L210 4.7L211 4.6L212 4.6L213 4.6L214 4.7L215 4.6L216 4.9L217 4.8L218 4.5L219 4.4L220 4.3L221 4.7L222 4.8L223 4.5L224 4.3L225 4.5L226 4.3L227 4.5L228 4.3L229 4.3L230 4.3L231 4.4L232 4.9L233 4.7L234 4.3L235 4.5L236 4.4L237 4.9L238 4.4L239 4.5L240 4.9L241 4.7L242 4.7L243 4.8L244 4.2L245 4.6L246 4.4L247 4.5L248 4.9L249 4.7L250 4.7L251 4.9L252 5.2L253 5.8L254 6.8L255 7.5L256 8.4L257 8.3L258 8.2L259 4.9L260 4.5L261 5.0L262 4.6L263 4.8L264 4.8L265 5.1L266 4.9L267 4.7L268 4.6L269 5.2L270 4.9L271 5.0L271 12.8L270 12.9L269 12.6L268 13.2L267 13.1L266 12.9L265 12.7L264 13.0L263 13.0L262 13.2L261 12.8L260 13.2L259 12.9L258 9.8L257 9.7L256 9.6L255 10.4L254 11.1L253 12.1L252 12.6L251 12.9L250 13.1L249 13.0L248 12.9L247 13.3L246 13.3L245 13.1L244 13.5L243 13.0L242 13.1L241 13.0L240 12.9L239 13.2L238 13.4L237 12.9L236 13.3L235 13.3L234 13.4L233 13.1L232 12.9L231 13.4L230 13.5L229 13.4L228 13.4L227 13.2L226 13.4L225 13.3L224 13.4L223 13.3L222 13.0L221 13.1L220 13.5L219 13.3L218 13.2L217 13.0L216 12.9L215 13.1L214 13.1L213 13.2L212 13.2L211 13.1L210 13.1L209 13.5L208 13.3L207 13.5L206 13.2L205 13.2L204 13.0L203 13.3L202 13.5L201 13.0L200 13.4L199 13.0L198 13.1L197 13.3L196 13.4L195 13.5L194 13.2L193 13.4L192 13.2L191 12.9L190 13.2L189 13.3L188 12.9L187 12.9L186 13.0L185 13.1L184 13.1L183 13.0L182 13.0L181 13.0L180 13.0L179 13.5L178 13.1L177 13.5L176 13.5L175 13.4L174 13.5L173 13.2L172 12.9L171 13.4L170 13.5L169 13.1L168 13.5L167 13.0L166 13.4L165 13.1L164 13.5L163 13.5L162 13.2L161 13.1L160 13.2L159 12.9L158 13.1L157 13.1L156 13.2L155 13.4L154 13.2L153 13.5L152 13.5L151 13.0L150 13.4L149 13.5L148 13.3L147 13.0L146 13.2L145 13.0L144 13.5L143 13.1L142 13.5L141 12.5L140 12.3L139 12.3L138 12.2L137 12.2L136 12.4L135 12.2L134 12.1L133 12.3L132 12.4L131 12.2L130 12.3L129 12.2L128 12.4L127 12.1L126 12.0L125 12.3L124 12.5L123 12.4L122 12.2L121 12.4L120 12.2L119 12.3L118 12.1L117 12.1L116 12.4L115 12.5L114 12.3L113 12.0L112 12.3L111 12.3L110 12.4L109 12.4L108 12.1L107 12.1L106 12.5L105 12.2L104 13.1L103 13.1L102 12.9L101 13.1L100 13.0L99 13.1L98 12.9L97 13.2L96 12.7L95 12.8L94 12.9L93 13.2L92 12.9L91 13.1L90 12.8L89 12.6L88 12.9L87 13.1L86 13.1L85 13.2L84 12.8L83 13.1L82 13.1L81 12.9L80 13.1L79 13.2L78 12.6L77 12.7L76 13.2L75 12.7L74 12.8L73 12.7L72 12.9L71 13.3L70 12.7L69 12.8L68 12.7L67 13.2L66 12.8L65 12.7L64 12.7L63 12.7L62 12.7L61 13.0L60 12.9L59 13.1L58 13.1L57 12.7L56 13.0L55 13.1L54 13.0L53 12.9L52 12.8L51 12.9L50 14.0L49 13.9L48 14.5L47 14.1L46 14.5L45 14.5L44 14.2L43 14.5L42 14.0L41 14.4L40 13.9L39 14.2L38 14.3L37 14.0L36 14.6L35 14.4L34 14.3L33 14.6L32 14.2L31 12.0L30 11.9L29 12.0L28 12.0L27 11.9L26 12.1L25 11.8L24 11.9L23 12.1L22 12.0L21 12.0L20 11.9L19 12.0L18 11.9L17 11.8L16 11.7L15 11.9L14 12.0L13 12.1L12 11.8L11 11.9L10 11.7L9 11.9L8 12.2L7 11.8L6 12.1L5 9.5L4 9.6L3 12.5L2 12.4L1 9.7L0 9.7Z" fill="#3a86a6"/><path d="M2 18.4H270.5" stroke="#1c6788" stroke-width="1.3" stroke-dasharray="1.2 0.6"/></svg>
<svg style="left:2516px;top:754px;" width="12" height="12" viewBox="0 0 12 12"><circle cx="5.8" cy="5.8" r="5" fill="#28292c"/><circle cx="5.8" cy="5.8" r="1.8" fill="#5a5b5e"/></svg>
<div style="left:2210px;top:783px;width:41px;height:41px;border:1px solid #8a8a8c;background:radial-gradient(circle at 50% 52%,#d80000 0%,#a80000 45%,#6e0000 100%);overflow:hidden;"><div class="t" style="left:9px;top:4px;font-family:'DejaVu Sans',sans-serif;font-size:30px;line-height:34px;color:rgba(255,255,255,0.13);">&#9835;</div><div class="t" style="left:1px;top:6px;width:38px;text-align:center;font-size:3.1px;line-height:4.6px;color:#fff;font-weight:bold;">FEUERSCHWANZ Warriors<br>Of The World United</div><div class="t" style="left:1px;top:22.5px;width:38px;text-align:center;font-size:2.7px;line-height:4px;color:#fff;">feat. Thomas Winkler, Saltatio</div></div>
<div class="t" style="left:2263px;top:783.3px;font-size:10px;line-height:13px;color:#e6e6e8;">FEUERSCHWANZ Warriors Of The World United</div>
<div class="t" style="left:2263px;top:797.3px;font-size:10px;line-height:13px;color:#d0d0d2;">&nbsp;feat. Thomas Winkler, Saltatio</div>
<svg style="left:2264px;top:814px;" width="60" height="10" viewBox="0 0 60 10"><path transform="translate(0.0 0)" d="M4.6 0L5.9 3L9.2 3.3L6.7 5.5L7.5 8.7L4.6 7L1.7 8.7L2.5 5.5L0 3.3L3.3 3Z" fill="#4c4d51"/><path transform="translate(12.1 0)" d="M4.6 0L5.9 3L9.2 3.3L6.7 5.5L7.5 8.7L4.6 7L1.7 8.7L2.5 5.5L0 3.3L3.3 3Z" fill="#4c4d51"/><path transform="translate(24.2 0)" d="M4.6 0L5.9 3L9.2 3.3L6.7 5.5L7.5 8.7L4.6 7L1.7 8.7L2.5 5.5L0 3.3L3.3 3Z" fill="#4c4d51"/><path transform="translate(36.3 0)" d="M4.6 0L5.9 3L9.2 3.3L6.7 5.5L7.5 8.7L4.6 7L1.7 8.7L2.5 5.5L0 3.3L3.3 3Z" fill="#4c4d51"/><path transform="translate(48.4 0)" d="M4.6 0L5.9 3L9.2 3.3L6.7 5.5L7.5 8.7L4.6 7L1.7 8.7L2.5 5.5L0 3.3L3.3 3Z" fill="#4c4d51"/></svg>
<div class="t" style="left:2211px;top:837.2px;font-size:9.5px;line-height:12px;color:#88888a;letter-spacing:-0.25px;">Year:</div>
<div style="left:2210px;top:849.2px;width:323px;height:13px;background:#2f3034;"></div>
<div class="t" style="left:2211px;top:850px;font-size:9.5px;line-height:12px;color:#88888a;letter-spacing:-0.25px;">Album:</div>
<div class="t" style="left:2211px;top:864.1px;font-size:9.5px;line-height:12px;color:#88888a;letter-spacing:-0.25px;">Genre:</div>
<svg style="left:2523.5px;top:867.4px;" width="8" height="5" viewBox="0 0 8 5"><path d="M0.5 0.8L4 4L7.5 0.8" fill="none" stroke="#6a6a6c" stroke-width="0.9"/></svg>
<div style="left:2210px;top:877.1px;width:323px;height:13px;background:#2f3034;"></div>
<div class="t" style="left:2211px;top:877.9px;font-size:9.5px;line-height:12px;color:#88888a;letter-spacing:-0.25px;">Bpm: <span style="color:#ececee;letter-spacing:-0.3px;margin-left:1.5px;">86.0</span></div>
<div class="t" style="left:2211px;top:891.2px;font-size:9.5px;line-height:12px;color:#88888a;letter-spacing:-0.25px;">Key: <span style="color:#ececee;letter-spacing:-0.3px;margin-left:1.5px;">Bm</span></div>
<div style="left:2210px;top:904.2px;width:323px;height:13px;background:#2f3034;"></div>
<div class="t" style="left:2211px;top:905px;font-size:9.5px;line-height:12px;color:#88888a;letter-spacing:-0.25px;">Length: <span style="color:#ececee;letter-spacing:-0.3px;margin-left:1.5px;">06:01</span></div>
<div class="t" style="left:2211px;top:918.9px;font-size:9.5px;line-height:12px;color:#88888a;letter-spacing:-0.25px;">First Seen: <span style="color:#ececee;letter-spacing:-0.3px;margin-left:1.5px;">11/22 02:57 AM</span></div>
<div style="left:2210px;top:932px;width:323px;height:13px;background:#2f3034;"></div>
<div class="t" style="left:2211px;top:932.8px;font-size:9.5px;line-height:12px;color:#88888a;letter-spacing:-0.25px;">Last Play: <span style="color:#ececee;letter-spacing:-0.3px;margin-left:1.5px;">11/22 03:03 AM</span></div>
<div class="t" style="left:2211px;top:946px;font-size:9.5px;line-height:12px;color:#88888a;letter-spacing:-0.25px;">Play Count: <span style="color:#ececee;letter-spacing:-0.3px;margin-left:1.5px;">2</span></div>
<div style="left:2210px;top:959.3px;width:323px;height:13px;background:#2f3034;"></div>
<div class="t" style="left:2211px;top:960.1px;font-size:9.5px;line-height:12px;color:#88888a;letter-spacing:-0.25px;">Comment:</div>
<div class="t" style="left:2211px;top:973.9px;font-size:9.5px;line-height:12px;color:#88888a;letter-spacing:-0.25px;">User 1:</div>
<svg style="left:2523.5px;top:977.2px;" width="8" height="5" viewBox="0 0 8 5"><path d="M0.5 0.8L4 4L7.5 0.8" fill="none" stroke="#6a6a6c" stroke-width="0.9"/></svg>
<div style="left:2210px;top:986.3px;width:323px;height:13px;background:#2f3034;"></div>
<div class="t" style="left:2211px;top:987.1px;font-size:9.5px;line-height:12px;color:#88888a;letter-spacing:-0.25px;">User 2:</div>
<svg style="left:2523.5px;top:990.4px;" width="8" height="5" viewBox="0 0 8 5"><path d="M0.5 0.8L4 4L7.5 0.8" fill="none" stroke="#6a6a6c" stroke-width="0.9"/></svg>
</body></html>
